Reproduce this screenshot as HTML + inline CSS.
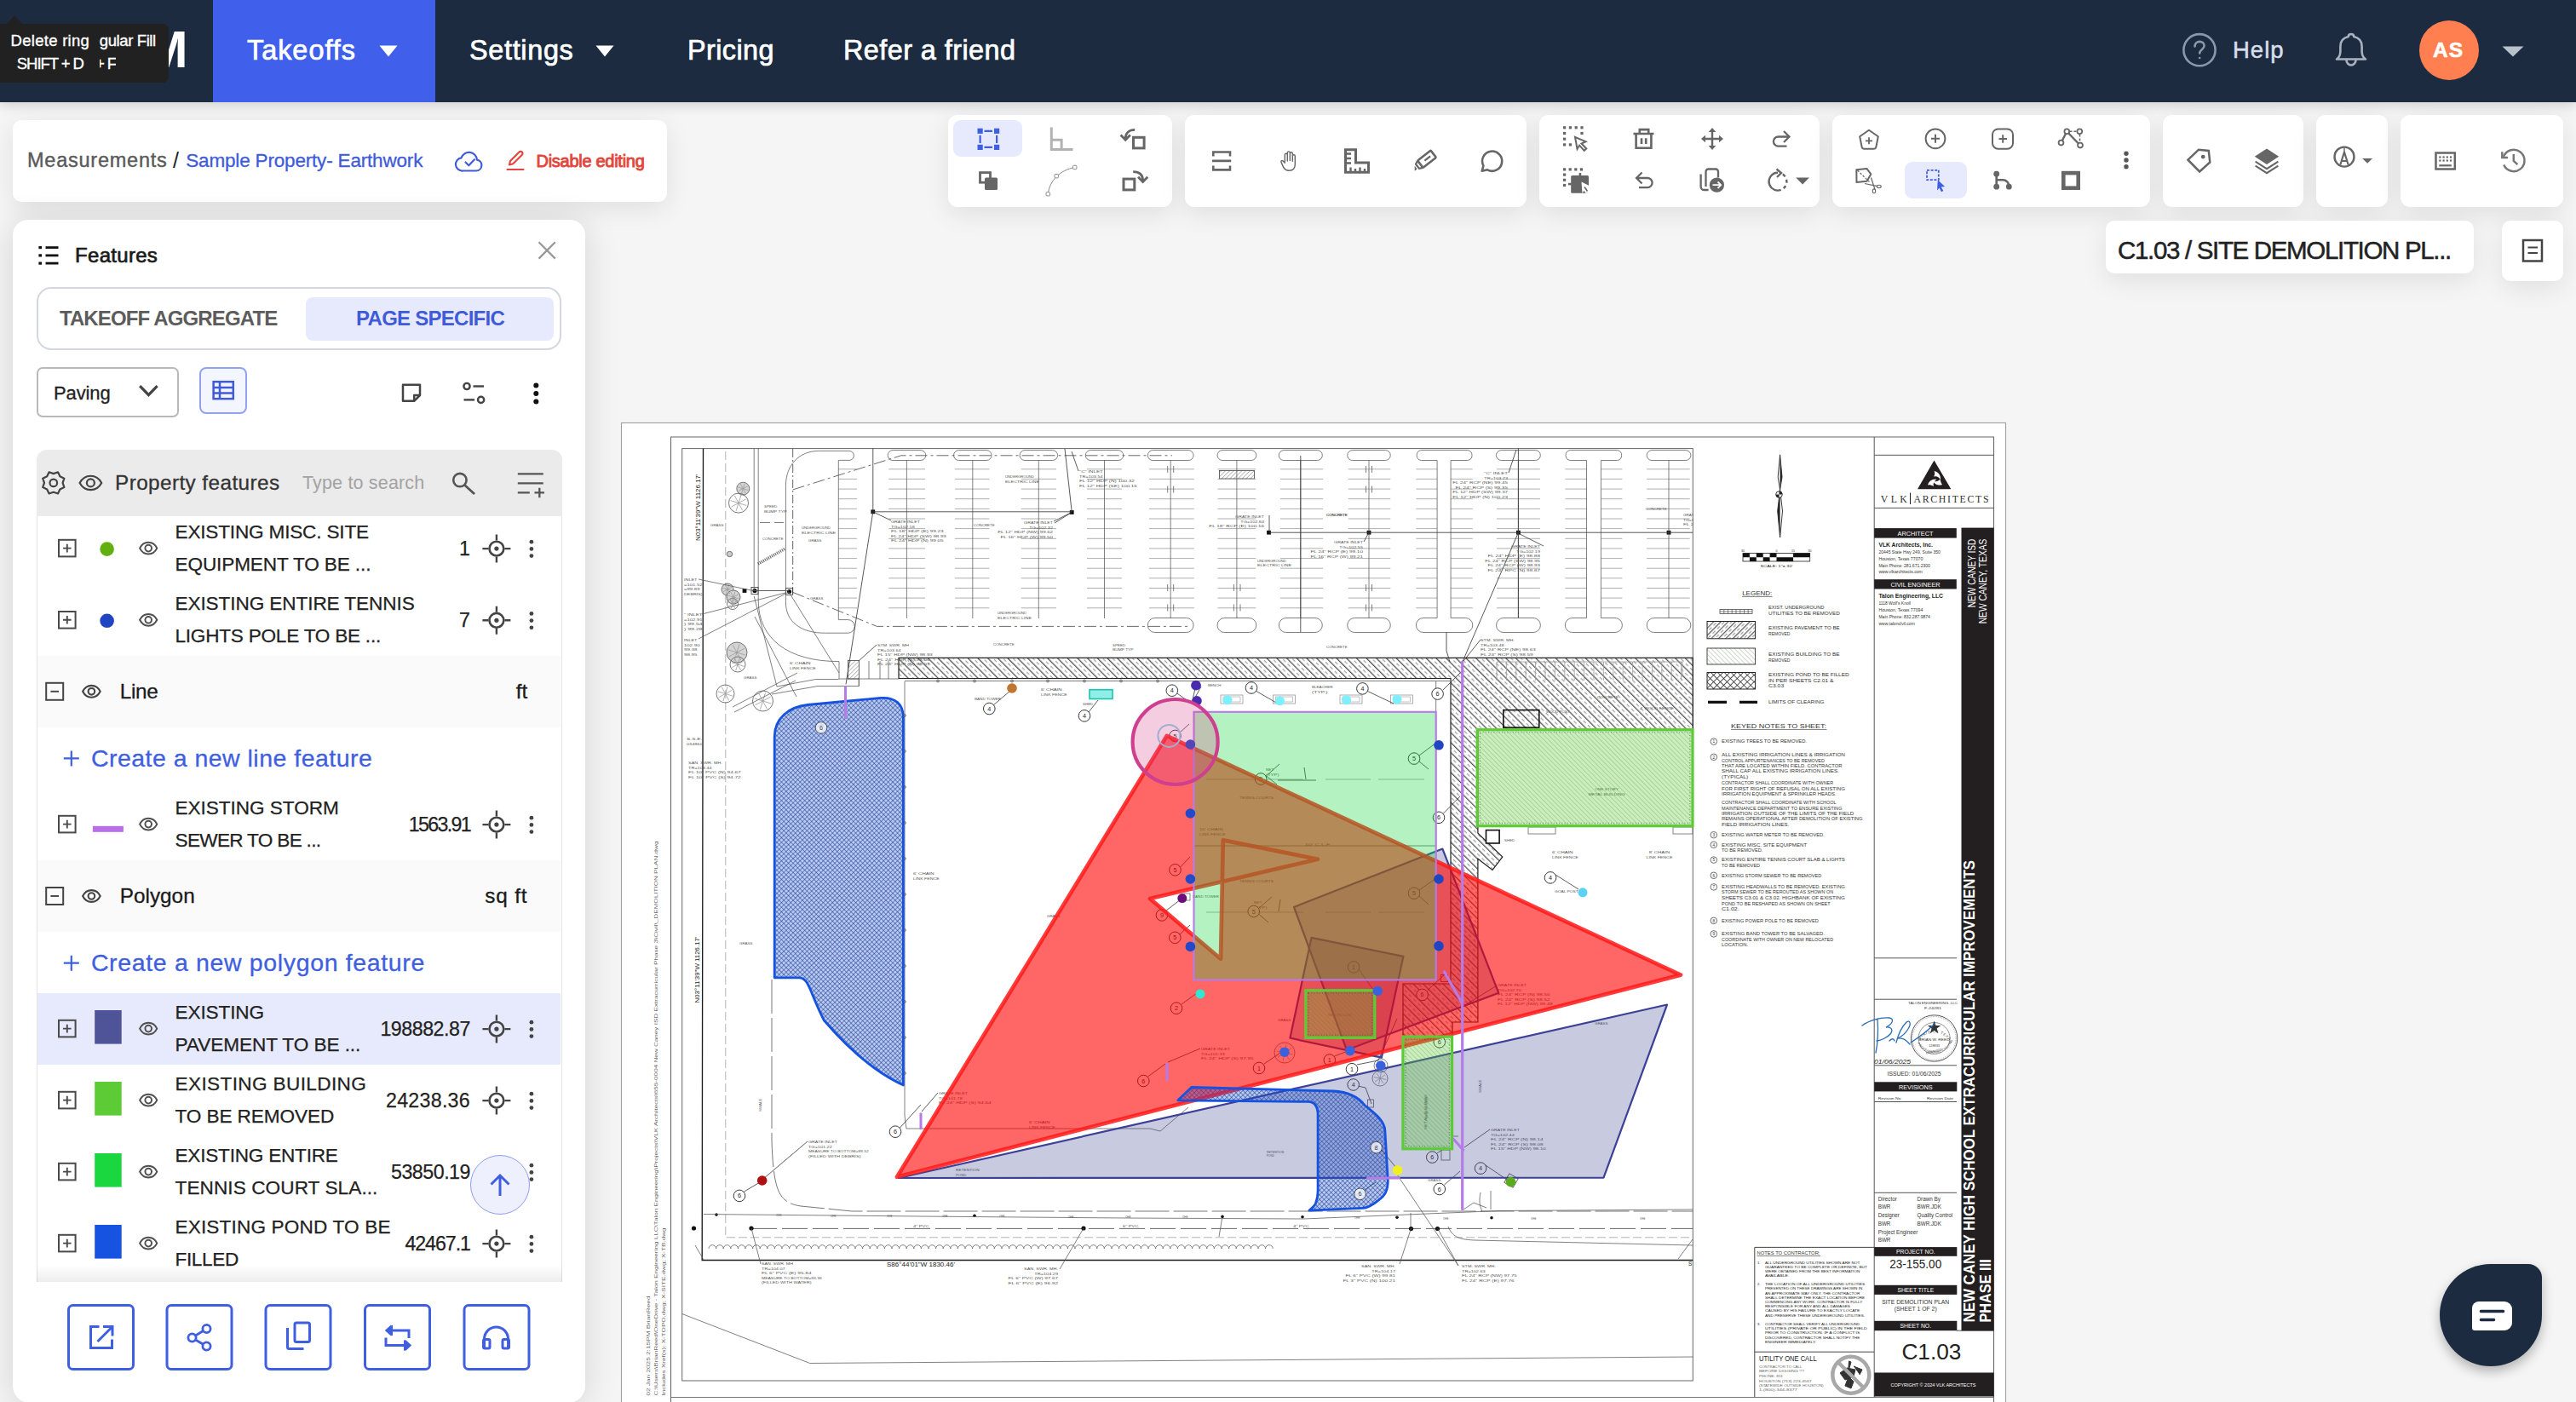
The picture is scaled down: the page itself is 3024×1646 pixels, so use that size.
<!DOCTYPE html>
<html><head><meta charset="utf-8"><title>Takeoff</title>
<style>
html,body{margin:0;padding:0}
body{width:3024px;height:1646px;overflow:hidden;background:#f5f5f5;position:relative;font-family:'Liberation Sans',sans-serif}
.t{position:absolute;white-space:nowrap;line-height:1;display:block}
.card{position:absolute;background:#fff;border-radius:12px;box-shadow:0 8px 30px rgba(0,0,0,.09)}
svg{position:absolute;overflow:visible}
</style></head><body>
<!-- part_map -->
<svg style="left:0;top:0" width="3024" height="1646" viewBox="0 0 3024 1646" font-family="'Liberation Sans',sans-serif">
<defs>
<pattern id="hA" patternUnits="userSpaceOnUse" width="8.270" height="7.500" patternTransform="rotate(-45)"><path d="M.700 0V7.500" stroke="#222" stroke-width="1"/><path d="M4.830 0V4.300" stroke="#555" stroke-width=".68"/></pattern>
<pattern id="hA2" patternUnits="userSpaceOnUse" width="6" height="7.500" patternTransform="rotate(45)"><path d="M.700 0V7.500" stroke="#2a2a2a" stroke-width=".9"/><path d="M3.700 0V4.300" stroke="#555" stroke-width=".7"/></pattern>
<pattern id="hX2" patternUnits="userSpaceOnUse" width="5.600" height="5.600" patternTransform="rotate(45)"><path d="M.400 0V5.600M0 .400H5.600" stroke="#222" stroke-width=".8"/></pattern>
<pattern id="hB" patternUnits="userSpaceOnUse" width="3.900" height="8" patternTransform="rotate(-45)"><path d="M0 0V8" stroke="#4a6a42" stroke-width=".55"/></pattern>
<pattern id="hL" patternUnits="userSpaceOnUse" width="3.400" height="8" patternTransform="rotate(45)"><path d="M0 0V8" stroke="#333" stroke-width=".7"/></pattern>
<pattern id="hX" patternUnits="userSpaceOnUse" width="3.850" height="3.850" patternTransform="rotate(45)"><path d="M.400 0V3.850M0 .400H3.850" stroke="#1f2c5c" stroke-width=".58"/></pattern>
<clipPath id="cpPlan"><rect x="800.700" y="526.600" width="1186.600" height="1094.400"/></clipPath>
</defs>
<rect x="729.500" y="496.500" width="1625" height="1170" fill="#fff" stroke="#a0a0a0" stroke-width="1.100"/>
<path d="M787.500 1646V513H2340.500V1646" fill="none" stroke="#666" stroke-width="1.100"/>
<path d="M787.500 1640.500H2340" fill="none" stroke="#777" stroke-width="1"/>
<rect x="800.700" y="526.600" width="1186.600" height="1094.400" fill="none" stroke="#666" stroke-width="1"/>
<path d="M825.500 526.600L824.200 1479.500H1987.300" fill="none" stroke="#1a1a1a" stroke-width="1.350"/>
<path d="M851.800 530V1452.800H1987" fill="none" stroke="#aaa" stroke-width=".9" stroke-dasharray="10 4"/>
<path d="M930.700 527V697.700" fill="none" stroke="#555" stroke-width=".9" stroke-dasharray="10 3 2 3"/>
<rect x="1431.500" y="552.500" width="41" height="9.500" fill="url(#hL)" stroke="#444" stroke-width=".8"/>
<rect x="1022.4" y="598.4" width="4.800" height="4.800" fill="#111"/>
<rect x="1255.8" y="599.1" width="4.800" height="4.800" fill="#111"/>
<rect x="1487.1" y="622.8" width="4.800" height="4.800" fill="#111"/>
<rect x="1604.6" y="622.8" width="4.800" height="4.800" fill="#111"/>
<rect x="1780.0" y="622.8" width="4.800" height="4.800" fill="#111"/>
<rect x="1956.6" y="622.8" width="4.800" height="4.800" fill="#111"/>
<rect x="871.6" y="691.1" width="4.800" height="4.800" fill="#111"/>
<path d="M930.700 574.900L1057.800 534.800H1376M930.700 695.400L1029.500 735.400H1395" fill="none" stroke="#444" stroke-width=".8" stroke-dasharray="14 4 3 4"/>
<circle cx="886" cy="693.500" r="2.600" fill="#111"/><circle cx="926.500" cy="694.500" r="2.600" fill="#111"/><rect x="882" y="689.500" width="8" height="8" fill="none" stroke="#333" stroke-width=".8"/><rect x="922.500" y="690.500" width="8" height="8" fill="none" stroke="#333" stroke-width=".8"/>
<path d="M890 662L922 644" stroke="#555" stroke-width="3.500" stroke-dasharray="1 1.300" fill="none"/>
<circle cx="872.3" cy="573.7" r="7.5" fill="#d4d4d4" stroke="#555" stroke-width=".8"/>
<circle cx="867" cy="590.6" r="11.5" fill="none" stroke="#555" stroke-width=".8"/>
<circle cx="854" cy="692" r="7" fill="#d4d4d4" stroke="#555" stroke-width=".8"/>
<circle cx="861" cy="701" r="8" fill="#d4d4d4" stroke="#555" stroke-width=".8"/>
<circle cx="860" cy="709" r="6.5" fill="none" stroke="#555" stroke-width=".8"/>
<circle cx="865" cy="766" r="12" fill="#d4d4d4" stroke="#555" stroke-width=".8"/>
<circle cx="866" cy="780" r="9" fill="none" stroke="#555" stroke-width=".8"/>
<circle cx="851.5" cy="814.5" r="10.5" fill="none" stroke="#555" stroke-width=".8"/>
<circle cx="895.5" cy="823" r="12" fill="none" stroke="#555" stroke-width=".8"/>
<circle cx="856.500" cy="650.500" r="3.200" fill="#ccc" stroke="#555" stroke-width=".8"/>
<path d="M1055 772.400H1987.300V856.700H1734.900V978.200L1763.800 1006L1752 1021.400L1734.900 1008.200V1200H1705V1217H1647V1155H1703V796.500H1055Z" fill="url(#hA)" stroke="#222" stroke-width="1.200"/>
<rect x="995.400" y="775.400" width="13" height="21.600" fill="url(#hL)" stroke="#444" stroke-width=".8"/>
<circle cx="1101" cy="799.500" r="1.500" fill="#fff" stroke="#444" stroke-width=".7"/>
<circle cx="1144" cy="799.500" r="1.500" fill="#fff" stroke="#444" stroke-width=".7"/>
<circle cx="1188" cy="799.500" r="1.500" fill="#fff" stroke="#444" stroke-width=".7"/>
<circle cx="1230" cy="799.500" r="1.500" fill="#fff" stroke="#444" stroke-width=".7"/>
<circle cx="1273" cy="799.500" r="1.500" fill="#fff" stroke="#444" stroke-width=".7"/>
<circle cx="1316" cy="799.500" r="1.500" fill="#fff" stroke="#444" stroke-width=".7"/>
<circle cx="1359" cy="799.500" r="1.500" fill="#fff" stroke="#444" stroke-width=".7"/>
<circle cx="1062" cy="840" r="1.400" fill="#fff" stroke="#444" stroke-width=".7"/>
<circle cx="1062" cy="882" r="1.400" fill="#fff" stroke="#444" stroke-width=".7"/>
<circle cx="1062" cy="924" r="1.400" fill="#fff" stroke="#444" stroke-width=".7"/>
<circle cx="1062" cy="966" r="1.400" fill="#fff" stroke="#444" stroke-width=".7"/>
<circle cx="1062" cy="1008" r="1.400" fill="#fff" stroke="#444" stroke-width=".7"/>
<circle cx="1062" cy="1050" r="1.400" fill="#fff" stroke="#444" stroke-width=".7"/>
<circle cx="1062" cy="1092" r="1.400" fill="#fff" stroke="#444" stroke-width=".7"/>
<circle cx="1062" cy="1134" r="1.400" fill="#fff" stroke="#444" stroke-width=".7"/>
<circle cx="1062" cy="1176" r="1.400" fill="#fff" stroke="#444" stroke-width=".7"/>
<circle cx="1062" cy="1218" r="1.400" fill="#fff" stroke="#444" stroke-width=".7"/>
<circle cx="1062" cy="1260" r="1.400" fill="#fff" stroke="#444" stroke-width=".7"/>
<rect x="1734.2" y="856.7" width="252.8" height="113.0" fill="url(#hB)" stroke="#333" stroke-width=".8"/>
<rect x="1532.8" y="1162.8" width="81.0" height="55.5" fill="url(#hB)" stroke="#333" stroke-width=".8"/>
<rect x="1646.9" y="1217.1" width="57.7" height="131.7" fill="url(#hB)" stroke="#333" stroke-width=".8"/>
<rect x="1764.800" y="833.600" width="42" height="20.500" fill="none" stroke="#111" stroke-width="1.600"/>
<rect x="1744.500" y="974.600" width="15.600" height="15.400" fill="#fff" stroke="#111" stroke-width="1.600"/>
<rect x="1794" y="971" width="32" height="8" fill="none" stroke="#666" stroke-width=".8"/><rect x="1964" y="971" width="23" height="8" fill="none" stroke="#666" stroke-width=".8"/>
<rect x="1433" y="816" width="26" height="10" fill="none" stroke="#999" stroke-width=".8"/><rect x="1436" y="818" width="20" height="6" fill="none" stroke="#aaa" stroke-width=".7"/>
<rect x="1494.5" y="816" width="26" height="10" fill="none" stroke="#999" stroke-width=".8"/><rect x="1497.5" y="818" width="20" height="6" fill="none" stroke="#aaa" stroke-width=".7"/>
<rect x="1573" y="816" width="26" height="10" fill="none" stroke="#999" stroke-width=".8"/><rect x="1576" y="818" width="20" height="6" fill="none" stroke="#aaa" stroke-width=".7"/>
<rect x="1632.5" y="816" width="26" height="10" fill="none" stroke="#999" stroke-width=".8"/><rect x="1635.5" y="818" width="20" height="6" fill="none" stroke="#aaa" stroke-width=".7"/>
<path d="M906 1150V1340C908 1400 915 1412 940 1416L1000 1422H1987" fill="none" stroke="#666" stroke-width=".9" stroke-dasharray="40 5"/>
<circle cx="841" cy="1426.1" r="1.800" fill="#111"/>
<circle cx="1144" cy="1427.3" r="1.800" fill="#111"/>
<circle cx="1435" cy="1428.4" r="1.800" fill="#111"/>
<circle cx="1529" cy="1428.8" r="1.800" fill="#111"/>
<circle cx="1640" cy="1429.3" r="1.800" fill="#111"/>
<circle cx="1751" cy="1429.7" r="1.800" fill="#111"/>
<path d="M882 1442.400H1987" fill="none" stroke="#555" stroke-width=".9" stroke-dasharray="30 6"/>
<circle cx="882" cy="1442" r="2.600" fill="#111"/>
<circle cx="1272" cy="1442" r="2.600" fill="#111"/>
<circle cx="1656.5" cy="1442.5" r="2.600" fill="#111"/>
<circle cx="1687.5" cy="1442.5" r="2.600" fill="#111"/>
<circle cx="814.5" cy="1442" r="2.600" fill="#111"/>
<path d="M832.0 1466a4.300 4.300 0 0 1 8.600 0M840.6 1466a4.300 4.300 0 0 1 8.600 0M849.2 1466a4.300 4.300 0 0 1 8.600 0M857.8 1466a4.300 4.300 0 0 1 8.600 0M866.4 1466a4.300 4.300 0 0 1 8.600 0M875.0 1466a4.300 4.300 0 0 1 8.600 0M883.6 1466a4.300 4.300 0 0 1 8.600 0M892.2 1466a4.300 4.300 0 0 1 8.600 0M900.8 1466a4.300 4.300 0 0 1 8.600 0M909.4 1466a4.300 4.300 0 0 1 8.600 0M918.0 1466a4.300 4.300 0 0 1 8.600 0M926.6 1466a4.300 4.300 0 0 1 8.600 0M935.2 1466a4.300 4.300 0 0 1 8.600 0M943.8 1466a4.300 4.300 0 0 1 8.600 0M952.4 1466a4.300 4.300 0 0 1 8.600 0M961.0 1466a4.300 4.300 0 0 1 8.600 0M969.6 1466a4.300 4.300 0 0 1 8.600 0M978.2 1466a4.300 4.300 0 0 1 8.600 0M986.8 1466a4.300 4.300 0 0 1 8.600 0M995.4 1466a4.300 4.300 0 0 1 8.600 0M1004.0 1466a4.300 4.300 0 0 1 8.600 0M1012.6 1466a4.300 4.300 0 0 1 8.600 0M1021.2 1466a4.300 4.300 0 0 1 8.600 0M1029.8 1466a4.300 4.300 0 0 1 8.600 0M1038.4 1466a4.300 4.300 0 0 1 8.600 0M1047.0 1466a4.300 4.300 0 0 1 8.600 0M1055.6 1466a4.300 4.300 0 0 1 8.600 0M1064.2 1466a4.300 4.300 0 0 1 8.600 0M1072.8 1466a4.300 4.300 0 0 1 8.600 0M1081.4 1466a4.300 4.300 0 0 1 8.600 0M1090.0 1466a4.300 4.300 0 0 1 8.600 0M1098.6 1466a4.300 4.300 0 0 1 8.600 0M1107.2 1466a4.300 4.300 0 0 1 8.600 0M1115.8 1466a4.300 4.300 0 0 1 8.600 0M1124.4 1466a4.300 4.300 0 0 1 8.600 0M1133.0 1466a4.300 4.300 0 0 1 8.600 0M1141.6 1466a4.300 4.300 0 0 1 8.600 0M1150.2 1466a4.300 4.300 0 0 1 8.600 0M1158.8 1466a4.300 4.300 0 0 1 8.600 0M1167.4 1466a4.300 4.300 0 0 1 8.600 0M1176.0 1466a4.300 4.300 0 0 1 8.600 0M1184.6 1466a4.300 4.300 0 0 1 8.600 0M1193.2 1466a4.300 4.300 0 0 1 8.600 0M1201.8 1466a4.300 4.300 0 0 1 8.600 0M1210.4 1466a4.300 4.300 0 0 1 8.600 0M1219.0 1466a4.300 4.300 0 0 1 8.600 0M1227.6 1466a4.300 4.300 0 0 1 8.600 0M1236.2 1466a4.300 4.300 0 0 1 8.600 0M1244.8 1466a4.300 4.300 0 0 1 8.600 0M1253.4 1466a4.300 4.300 0 0 1 8.600 0M1262.0 1466a4.300 4.300 0 0 1 8.600 0M1270.6 1466a4.300 4.300 0 0 1 8.600 0M1279.2 1466a4.300 4.300 0 0 1 8.600 0M1287.8 1466a4.300 4.300 0 0 1 8.600 0M1296.4 1466a4.300 4.300 0 0 1 8.600 0M1305.0 1466a4.300 4.300 0 0 1 8.600 0M1313.6 1466a4.300 4.300 0 0 1 8.600 0M1322.2 1466a4.300 4.300 0 0 1 8.600 0M1330.8 1466a4.300 4.300 0 0 1 8.600 0M1339.4 1466a4.300 4.300 0 0 1 8.600 0M1348.0 1466a4.300 4.300 0 0 1 8.600 0M1356.6 1466a4.300 4.300 0 0 1 8.600 0M1365.2 1466a4.300 4.300 0 0 1 8.600 0M1373.8 1466a4.300 4.300 0 0 1 8.600 0M1382.4 1466a4.300 4.300 0 0 1 8.600 0M1391.0 1466a4.300 4.300 0 0 1 8.600 0M1399.6 1466a4.300 4.300 0 0 1 8.600 0M1408.2 1466a4.300 4.300 0 0 1 8.600 0M1416.8 1466a4.300 4.300 0 0 1 8.600 0M1425.4 1466a4.300 4.300 0 0 1 8.600 0M1434.0 1466a4.300 4.300 0 0 1 8.600 0M1442.6 1466a4.300 4.300 0 0 1 8.600 0M1451.2 1466a4.300 4.300 0 0 1 8.600 0M1459.8 1466a4.300 4.300 0 0 1 8.600 0M1468.4 1466a4.300 4.300 0 0 1 8.600 0M1477.0 1466a4.300 4.300 0 0 1 8.600 0M1485.6 1466a4.300 4.300 0 0 1 8.600 0" fill="none" stroke="#666" stroke-width=".8"/>
<rect x="1691.500" y="1144.500" width="8" height="8" fill="none" stroke="#a33" stroke-width="1"/>
<rect x="1390" y="1049" width="7" height="8" fill="#fff" stroke="#666" stroke-width=".8"/>
<rect x="1692" y="1350" width="10" height="12" fill="none" stroke="#555" stroke-width=".8"/><rect x="1605.500" y="1291" width="7" height="9" fill="none" stroke="#555" stroke-width=".8"/>
<rect x="1768" y="1380" width="12" height="12" fill="none" stroke="#444" stroke-width=".8" transform="rotate(30 1774 1386)"/>
<circle cx="1508" cy="1236" r="12" fill="none" stroke="#666" stroke-width=".8"/>
<circle cx="1621" cy="1251" r="8" fill="none" stroke="#666" stroke-width=".8"/>
<circle cx="1620" cy="1266" r="9" fill="none" stroke="#666" stroke-width=".8"/>
<path d="M984.3 550.8L1006.0 550.8M984.3 562.4L1006.0 562.4M984.3 574.1L1006.0 574.1M984.3 585.7L1006.0 585.7M984.3 597.4L1006.0 597.4M984.3 609.0L1006.0 609.0M984.3 620.6L1006.0 620.6M984.3 632.3L1006.0 632.3M984.3 643.9L1006.0 643.9M984.3 655.6L1006.0 655.6M984.3 667.2L1006.0 667.2M984.3 678.8L1006.0 678.8M984.3 690.5L1006.0 690.5M984.3 702.1L1006.0 702.1M984.3 713.8L1006.0 713.8M1043.2 550.8L1086.0 550.8M1043.2 562.4L1086.0 562.4M1043.2 574.1L1086.0 574.1M1043.2 585.7L1086.0 585.7M1043.2 597.4L1086.0 597.4M1043.2 609.0L1086.0 609.0M1043.2 620.6L1086.0 620.6M1043.2 632.3L1086.0 632.3M1043.2 643.9L1086.0 643.9M1043.2 655.6L1086.0 655.6M1043.2 667.2L1086.0 667.2M1043.2 678.8L1086.0 678.8M1043.2 690.5L1086.0 690.5M1043.2 702.1L1086.0 702.1M1043.2 713.8L1086.0 713.8M1120.9 550.8L1161.4 550.8M1120.9 562.4L1161.4 562.4M1120.9 574.1L1161.4 574.1M1120.9 585.7L1161.4 585.7M1120.9 597.4L1161.4 597.4M1120.9 609.0L1161.4 609.0M1120.9 620.6L1161.4 620.6M1120.9 632.3L1161.4 632.3M1120.9 643.9L1161.4 643.9M1120.9 655.6L1161.4 655.6M1120.9 667.2L1161.4 667.2M1120.9 678.8L1161.4 678.8M1120.9 690.5L1161.4 690.5M1120.9 702.1L1161.4 702.1M1120.9 713.8L1161.4 713.8M1198.8 550.8L1240.0 550.8M1198.8 562.4L1240.0 562.4M1198.8 574.1L1240.0 574.1M1198.8 585.7L1240.0 585.7M1198.8 597.4L1240.0 597.4M1198.8 609.0L1240.0 609.0M1198.8 620.6L1240.0 620.6M1198.8 632.3L1240.0 632.3M1198.8 643.9L1240.0 643.9M1198.8 655.6L1240.0 655.6M1198.8 667.2L1240.0 667.2M1198.8 678.8L1240.0 678.8M1198.8 690.5L1240.0 690.5M1198.8 702.1L1240.0 702.1M1198.8 713.8L1240.0 713.8M1276.0 550.8L1317.0 550.8M1276.0 562.4L1317.0 562.4M1276.0 574.1L1317.0 574.1M1276.0 585.7L1317.0 585.7M1276.0 597.4L1317.0 597.4M1276.0 609.0L1317.0 609.0M1276.0 620.6L1317.0 620.6M1276.0 632.3L1317.0 632.3M1276.0 643.9L1317.0 643.9M1276.0 655.6L1317.0 655.6M1276.0 667.2L1317.0 667.2M1276.0 678.8L1317.0 678.8M1276.0 690.5L1317.0 690.5M1276.0 702.1L1317.0 702.1M1276.0 713.8L1317.0 713.8M1349.0 550.8L1401.8 550.8M1349.0 562.4L1401.8 562.4M1349.0 574.1L1401.8 574.1M1349.0 585.7L1401.8 585.7M1349.0 597.4L1401.8 597.4M1349.0 609.0L1401.8 609.0M1349.0 620.6L1401.8 620.6M1349.0 632.3L1401.8 632.3M1349.0 643.9L1401.8 643.9M1349.0 655.6L1401.8 655.6M1349.0 667.2L1401.8 667.2M1349.0 678.8L1401.8 678.8M1349.0 690.5L1401.8 690.5M1349.0 702.1L1401.8 702.1M1349.0 713.8L1401.8 713.8M1429.5 550.8L1474.3 550.8M1429.5 562.4L1474.3 562.4M1429.5 574.1L1474.3 574.1M1429.5 585.7L1474.3 585.7M1429.5 597.4L1474.3 597.4M1429.5 609.0L1474.3 609.0M1429.5 620.6L1474.3 620.6M1429.5 632.3L1474.3 632.3M1429.5 643.9L1474.3 643.9M1429.5 655.6L1474.3 655.6M1429.5 667.2L1474.3 667.2M1429.5 678.8L1474.3 678.8M1429.5 690.5L1474.3 690.5M1429.5 702.1L1474.3 702.1M1429.5 713.8L1474.3 713.8M1503.0 550.8L1553.1 550.8M1503.0 562.4L1553.1 562.4M1503.0 574.1L1553.1 574.1M1503.0 585.7L1553.1 585.7M1503.0 597.4L1553.1 597.4M1503.0 609.0L1553.1 609.0M1503.0 620.6L1553.1 620.6M1503.0 632.3L1553.1 632.3M1503.0 643.9L1553.1 643.9M1503.0 655.6L1553.1 655.6M1503.0 667.2L1553.1 667.2M1503.0 678.8L1553.1 678.8M1503.0 690.5L1553.1 690.5M1503.0 702.1L1553.1 702.1M1503.0 713.8L1553.1 713.8M1582.8 550.8L1632.3 550.8M1582.8 562.4L1632.3 562.4M1582.8 574.1L1632.3 574.1M1582.8 585.7L1632.3 585.7M1582.8 597.4L1632.3 597.4M1582.8 609.0L1632.3 609.0M1582.8 620.6L1632.3 620.6M1582.8 632.3L1632.3 632.3M1582.8 643.9L1632.3 643.9M1582.8 655.6L1632.3 655.6M1582.8 667.2L1632.3 667.2M1582.8 678.8L1632.3 678.8M1582.8 690.5L1632.3 690.5M1582.8 702.1L1632.3 702.1M1582.8 713.8L1632.3 713.8M1757.0 550.8L1807.9 550.8M1757.0 562.4L1807.9 562.4M1757.0 574.1L1807.9 574.1M1757.0 585.7L1807.9 585.7M1757.0 597.4L1807.9 597.4M1757.0 609.0L1807.9 609.0M1757.0 620.6L1807.9 620.6M1757.0 632.3L1807.9 632.3M1757.0 643.9L1807.9 643.9M1757.0 655.6L1807.9 655.6M1757.0 667.2L1807.9 667.2M1757.0 678.8L1807.9 678.8M1757.0 690.5L1807.9 690.5M1757.0 702.1L1807.9 702.1M1757.0 713.8L1807.9 713.8M1933.1 550.8L1983.7 550.8M1933.1 562.4L1983.7 562.4M1933.1 574.1L1983.7 574.1M1933.1 585.7L1983.7 585.7M1933.1 597.4L1983.7 597.4M1933.1 609.0L1983.7 609.0M1933.1 620.6L1983.7 620.6M1933.1 632.3L1983.7 632.3M1933.1 643.9L1983.7 643.9M1933.1 655.6L1983.7 655.6M1933.1 667.2L1983.7 667.2M1933.1 678.8L1983.7 678.8M1933.1 690.5L1983.7 690.5M1933.1 702.1L1983.7 702.1M1933.1 713.8L1983.7 713.8M1662.4 550.8L1687.1 550.8M1703.1 550.8L1728.8 550.8M1662.4 562.4L1687.1 562.4M1703.1 562.4L1728.8 562.4M1662.4 574.1L1687.1 574.1M1703.1 574.1L1728.8 574.1M1662.4 585.7L1687.1 585.7M1703.1 585.7L1728.8 585.7M1662.4 597.4L1687.1 597.4M1703.1 597.4L1728.8 597.4M1662.4 609.0L1687.1 609.0M1703.1 609.0L1728.8 609.0M1662.4 620.6L1687.1 620.6M1703.1 620.6L1728.8 620.6M1662.4 632.3L1687.1 632.3M1703.1 632.3L1728.8 632.3M1662.4 643.9L1687.1 643.9M1703.1 643.9L1728.8 643.9M1662.4 655.6L1687.1 655.6M1703.1 655.6L1728.8 655.6M1662.4 667.2L1687.1 667.2M1703.1 667.2L1728.8 667.2M1662.4 678.8L1687.1 678.8M1703.1 678.8L1728.8 678.8M1662.4 690.5L1687.1 690.5M1703.1 690.5L1728.8 690.5M1662.4 702.1L1687.1 702.1M1703.1 702.1L1728.8 702.1M1662.4 713.8L1687.1 713.8M1703.1 713.8L1728.8 713.8M1837.3 550.8L1862.5 550.8M1879.4 550.8L1904.4 550.8M1837.3 562.4L1862.5 562.4M1879.4 562.4L1904.4 562.4M1837.3 574.1L1862.5 574.1M1879.4 574.1L1904.4 574.1M1837.3 585.7L1862.5 585.7M1879.4 585.7L1904.4 585.7M1837.3 597.4L1862.5 597.4M1879.4 597.4L1904.4 597.4M1837.3 609.0L1862.5 609.0M1879.4 609.0L1904.4 609.0M1837.3 620.6L1862.5 620.6M1879.4 620.6L1904.4 620.6M1837.3 632.3L1862.5 632.3M1879.4 632.3L1904.4 632.3M1837.3 643.9L1862.5 643.9M1879.4 643.9L1904.4 643.9M1837.3 655.6L1862.5 655.6M1879.4 655.6L1904.4 655.6M1837.3 667.2L1862.5 667.2M1879.4 667.2L1904.4 667.2M1837.3 678.8L1862.5 678.8M1879.4 678.8L1904.4 678.8M1837.3 690.5L1862.5 690.5M1879.4 690.5L1904.4 690.5M1837.3 702.1L1862.5 702.1M1879.4 702.1L1904.4 702.1M1837.3 713.8L1862.5 713.8M1879.4 713.8L1904.4 713.8M872.3 573.7L878.4 575.6M872.3 573.7L875.3 579.3M872.3 573.7L870.4 579.8M872.3 573.7L866.7 576.7M872.3 573.7L866.2 571.8M872.3 573.7L869.3 568.1M872.3 573.7L874.2 567.6M872.3 573.7L877.9 570.7M867.0 590.6L876.3 593.5M867.0 590.6L871.6 599.2M867.0 590.6L864.1 599.9M867.0 590.6L858.4 595.2M867.0 590.6L857.7 587.7M867.0 590.6L862.4 582.0M867.0 590.6L869.9 581.3M867.0 590.6L875.6 586.0M854.0 692.0L859.7 693.8M854.0 692.0L856.8 697.3M854.0 692.0L852.2 697.7M854.0 692.0L848.7 694.8M854.0 692.0L848.3 690.2M854.0 692.0L851.2 686.7M854.0 692.0L855.8 686.3M854.0 692.0L859.3 689.2M861.0 701.0L867.5 703.0M861.0 701.0L864.2 707.0M861.0 701.0L859.0 707.5M861.0 701.0L855.0 704.2M861.0 701.0L854.5 699.0M861.0 701.0L857.8 695.0M861.0 701.0L863.0 694.5M861.0 701.0L867.0 697.8M860.0 709.0L865.3 710.6M860.0 709.0L862.6 713.9M860.0 709.0L858.4 714.3M860.0 709.0L855.1 711.6M860.0 709.0L854.7 707.4M860.0 709.0L857.4 704.1M860.0 709.0L861.6 703.7M860.0 709.0L864.9 706.4M865.0 766.0L874.7 769.0M865.0 766.0L869.8 775.0M865.0 766.0L862.0 775.7M865.0 766.0L856.0 770.8M865.0 766.0L855.3 763.0M865.0 766.0L860.2 757.0M865.0 766.0L868.0 756.3M865.0 766.0L874.0 761.2M866.0 780.0L873.3 782.3M866.0 780.0L869.6 786.8M866.0 780.0L863.7 787.3M866.0 780.0L859.2 783.6M866.0 780.0L858.7 777.7M866.0 780.0L862.4 773.2M866.0 780.0L868.3 772.7M866.0 780.0L872.8 776.4M851.5 814.5L860.0 817.1M851.5 814.5L855.7 822.4M851.5 814.5L848.9 823.0M851.5 814.5L843.6 818.7M851.5 814.5L843.0 811.9M851.5 814.5L847.3 806.6M851.5 814.5L854.1 806.0M851.5 814.5L859.4 810.3M895.5 823.0L905.2 826.0M895.5 823.0L900.3 832.0M895.5 823.0L892.5 832.7M895.5 823.0L886.5 827.8M895.5 823.0L885.8 820.0M895.5 823.0L890.7 814.0M895.5 823.0L898.5 813.3M895.5 823.0L904.5 818.2M1757.0 777.0L1757.0 799.0M1768.4 777.0L1768.4 799.0M1779.8 777.0L1779.8 799.0M1791.2 777.0L1791.2 799.0M1802.6 777.0L1802.6 799.0M1814.0 777.0L1814.0 799.0M1825.4 777.0L1825.4 799.0M1836.8 777.0L1836.8 799.0M1848.2 777.0L1848.2 799.0M1859.6 777.0L1859.6 799.0M1871.0 777.0L1871.0 799.0M1882.4 777.0L1882.4 799.0M1893.8 777.0L1893.8 799.0M1905.2 777.0L1905.2 799.0M1916.6 777.0L1916.6 799.0M1928.0 777.0L1928.0 799.0M1939.4 777.0L1939.4 799.0M1950.8 777.0L1950.8 799.0M1962.2 777.0L1962.2 799.0M1973.6 777.0L1973.6 799.0M1757 777H1975V795M1416 915H1530M1556 915H1609M1618 915H1672M1416 1071H1530M1556 1071H1609M1618 1071H1672M1508.0 1236.0L1517.4 1237.9M1508.0 1236.0L1513.3 1244.0M1508.0 1236.0L1506.1 1245.4M1508.0 1236.0L1500.0 1241.3M1508.0 1236.0L1498.6 1234.1M1508.0 1236.0L1502.7 1228.0M1508.0 1236.0L1509.9 1226.6M1508.0 1236.0L1516.0 1230.7M1621.0 1251.0L1627.3 1252.3M1621.0 1251.0L1624.5 1256.3M1621.0 1251.0L1619.7 1257.3M1621.0 1251.0L1615.7 1254.5M1621.0 1251.0L1614.7 1249.7M1621.0 1251.0L1617.5 1245.7M1621.0 1251.0L1622.3 1244.7M1621.0 1251.0L1626.3 1247.5M1620.0 1266.0L1627.1 1267.4M1620.0 1266.0L1624.0 1272.0M1620.0 1266.0L1618.6 1273.1M1620.0 1266.0L1614.0 1270.0M1620.0 1266.0L1612.9 1264.6M1620.0 1266.0L1616.0 1260.0M1620.0 1266.0L1621.4 1258.9M1620.0 1266.0L1626.0 1262.0" fill="none" stroke="#9a9a9a" stroke-width=".8"/>
<path d="M800.700 1542.500L950.700 1600.500L1987.300 1593M885.200 526.600V693M890.200 526.600V705C890.200 750 925 776.600 985 776.600V797M885.200 700L912 806M961.300 529.400H996.900A5.500 5.500 0 0 1 996.900 540.400H984.300V727.600H995.500A7.800 7.800 0 0 1 995.500 743.200H968.300C940 743.200 922.400 730 922.400 707V570.600C922.400 546 938 529.400 961.300 529.400ZM1064.4 540.5L1064.4 726.0M1048.1 528.6H1080.8A5.9 5.9 0 0 1 1080.8 540.5H1048.1A5.9 5.9 0 0 1 1048.1 528.6ZM1141.8 540.5L1141.8 726.0M1125.5 528.6H1158.1A5.9 5.9 0 0 1 1158.1 540.5H1125.5A5.9 5.9 0 0 1 1125.5 528.6ZM1219.3 540.5L1219.3 726.0M1203.0 528.6H1235.6A5.9 5.9 0 0 1 1235.6 540.5H1203.0A5.9 5.9 0 0 1 1203.0 528.6ZM1296.5 540.5L1296.5 726.0M1280.2 528.6H1312.8A5.9 5.9 0 0 1 1312.8 540.5H1280.2A5.9 5.9 0 0 1 1280.2 528.6ZM1374.2 540.5L1374.2 726.0M1353.3 528.6H1395.1A5.9 5.9 0 0 1 1395.1 540.5H1353.3A5.9 5.9 0 0 1 1353.3 528.6ZM1355.8 725.5H1392.6A8.5 8.5 0 0 1 1392.6 742.5H1355.8A8.5 8.5 0 0 1 1355.8 725.5ZM1451.9 540.5L1451.9 726.0M1435.0 528.6H1468.9A5.9 5.9 0 0 1 1468.9 540.5H1435.0A5.9 5.9 0 0 1 1435.0 528.6ZM1437.5 725.5H1466.3A8.5 8.5 0 0 1 1466.3 742.5H1437.5A8.5 8.5 0 0 1 1437.5 725.5ZM1526.8 540.5L1526.8 726.0M1507.2 528.6H1546.4A5.9 5.9 0 0 1 1546.4 540.5H1507.2A5.9 5.9 0 0 1 1507.2 528.6ZM1509.8 725.5H1543.8A8.5 8.5 0 0 1 1543.8 742.5H1509.8A8.5 8.5 0 0 1 1509.8 725.5ZM1607.0 540.5L1607.0 726.0M1587.7 528.6H1626.3A5.9 5.9 0 0 1 1626.3 540.5H1587.7A5.9 5.9 0 0 1 1587.7 528.6ZM1590.2 725.5H1623.8A8.5 8.5 0 0 1 1623.8 742.5H1590.2A8.5 8.5 0 0 1 1590.2 725.5ZM1782.4 540.5L1782.4 726.0M1762.4 528.6H1802.4A5.9 5.9 0 0 1 1802.4 540.5H1762.4A5.9 5.9 0 0 1 1762.4 528.6ZM1765.0 725.5H1799.9A8.5 8.5 0 0 1 1799.9 742.5H1765.0A8.5 8.5 0 0 1 1765.0 725.5ZM1959.0 540.5L1959.0 726.0M1939.1 528.6H1978.9A5.9 5.9 0 0 1 1978.9 540.5H1939.1A5.9 5.9 0 0 1 1939.1 528.6ZM1941.7 725.5H1976.3A8.5 8.5 0 0 1 1976.3 742.5H1941.7A8.5 8.5 0 0 1 1941.7 725.5ZM1668.4 528.600H1722.8A6 6 0 0 1 1722.8 540.500H1703.1V725.500H1720.3A8.500 8.500 0 0 1 1720.3 742.500H1670.9A8.500 8.500 0 0 1 1670.9 725.500H1687.1V540.500H1668.4A6 6 0 0 1 1668.4 528.600ZM1843.3 528.600H1898.4A6 6 0 0 1 1898.4 540.500H1879.4V725.500H1895.9A8.500 8.500 0 0 1 1895.9 742.500H1845.8A8.500 8.500 0 0 1 1845.8 725.500H1862.5V540.500H1843.3A6 6 0 0 1 1843.3 528.600ZM1370.7 547.0L1370.7 555.0M1377.7 547.0L1377.7 555.0M1370.7 570.5L1370.7 578.5M1377.7 570.5L1377.7 578.5M1370.7 686.0L1370.7 694.0M1377.7 686.0L1377.7 694.0M1370.7 709.5L1370.7 717.5M1377.7 709.5L1377.7 717.5M1603.5 547.0L1603.5 555.0M1610.5 547.0L1610.5 555.0M1603.5 570.5L1603.5 578.5M1610.5 570.5L1610.5 578.5M1603.5 686.0L1603.5 694.0M1610.5 686.0L1610.5 694.0M1603.5 709.5L1603.5 717.5M1610.5 709.5L1610.5 717.5M1448.4 686.0L1448.4 694.0M1456.0 686.0L1456.0 694.0M1448.4 709.5L1448.4 717.5M1456.0 709.5L1456.0 717.5M820 680L884 693.500H922M824 721L922 696M820 750L926 695M926 695L985 790M885.200 693.500H926M892 613.500H904M909 613.500H920M886 724L935 818M912 806L957.700 797.500H984.800M906 815L960 805.500H1008.300V797M860 830L936 790M862 836L934 799M984.800 797H1055M1008.300 797V805.500M1020.0 776.0L1020.0 797.0M1033.0 776.0L1033.0 797.0M1043.0 776.0L1043.0 797.0M1062 799.500H1702M1062 800V1310L1064 1325H1350L1362 1328L1395 1300M1401.500 993H1685.700M1685.700 800V1150M826 1425.500L1080 1428L1320 1430L1530 1431L1760 1421.500L1987 1420M882 1442L893 1484M1272 1442L1244 1490M1656.500 1442L1643 1484M1687.500 1442L1712 1486L1640.700 1380M1434.500 1431L1431 1452M1656 1424V1440M826 1479L816 1462M1718 1420L1730 1412L1745 1418M1700 1440C1705 1452 1712 1455 1730 1456L1987 1462M1738 1400C1736 1410 1737 1416 1740 1422M1750 1398V1420M1970 1478L1987 1455M1705 1218V1334H1712M1706 1336L1712 1345" fill="none" stroke="#555" stroke-width=".75"/>
<path d="M1024.800 526.600V600.800L993 803.500M1024.800 600.800H1258.200L1250 527M1258 601.500L1238 614M1489.500 625.200H1987M1782.400 526.600V725M1782.400 625.200L1716.500 777.800M1526.800 535V742M1698 742V764L1702 777" fill="none" stroke="#3a3a3a" stroke-width=".85"/>
<path d="M909.200 1147.800V865C909.200 843 926 830 948 827.500L1034 819.400C1051 818.200 1060.400 827 1060.400 842V1274C1034 1262 1001 1237 967.400 1198C950.700 1166 950 1147.800 938 1147.800Z" fill="url(#hX)"/><path d="M1398.800 1276.500L1565.400 1281C1585 1282 1596 1290 1601.900 1297.500C1613 1306 1625.900 1316 1625.900 1328L1629.300 1386.500C1629 1398 1626 1404 1617.900 1409.300C1611 1415 1606 1418 1599.600 1418.400L1536.900 1421.100C1542 1417 1544.800 1414 1544.800 1411.600C1546.500 1407 1547.100 1402 1547.100 1397.900V1308.900C1547 1299 1543 1293.600 1535.700 1293.400L1382.800 1291.800Z" fill="url(#hX)"/>
<text x="1046.0" y="614.0" font-size="4.4" fill="#555" textLength="33.9" lengthAdjust="spacingAndGlyphs">GRATE INLET</text>
<text x="1046.0" y="619.6" font-size="4.4" fill="#555" textLength="27.7" lengthAdjust="spacingAndGlyphs">TG=102.18</text>
<text x="1046.0" y="625.2" font-size="4.4" fill="#555" textLength="61.6" lengthAdjust="spacingAndGlyphs">FL 18&quot; HDP (E) 99.23</text>
<text x="1046.0" y="630.8" font-size="4.4" fill="#555" textLength="64.7" lengthAdjust="spacingAndGlyphs">FL 24&quot; HDP (SW) 98.93</text>
<text x="1046.0" y="636.4" font-size="4.4" fill="#555" textLength="61.6" lengthAdjust="spacingAndGlyphs">FL 24&quot; HDP (N) 99.05</text>
<text x="1236.0" y="615.0" font-size="4.4" fill="#555" text-anchor="end" textLength="33.9" lengthAdjust="spacingAndGlyphs">GRATE INLET</text>
<text x="1236.0" y="620.6" font-size="4.4" fill="#555" text-anchor="end" textLength="27.7" lengthAdjust="spacingAndGlyphs">TG=102.32</text>
<text x="1236.0" y="626.2" font-size="4.4" fill="#555" text-anchor="end" textLength="64.7" lengthAdjust="spacingAndGlyphs">FL 12&quot; HDP (NW) 99.62</text>
<text x="1236.0" y="631.8" font-size="4.4" fill="#555" text-anchor="end" textLength="61.6" lengthAdjust="spacingAndGlyphs">FL 16&quot; HDP (W) 99.50</text>
<text x="1267.0" y="555.0" font-size="4.4" fill="#555" textLength="27.7" lengthAdjust="spacingAndGlyphs">&quot;C&quot; INLET</text>
<text x="1267.0" y="560.6" font-size="4.4" fill="#555" textLength="27.7" lengthAdjust="spacingAndGlyphs">TR=103.54</text>
<text x="1267.0" y="566.2" font-size="4.4" fill="#555" textLength="64.7" lengthAdjust="spacingAndGlyphs">FL 12&quot; HDP (N) 100.32</text>
<text x="1267.0" y="571.8" font-size="4.4" fill="#555" textLength="67.8" lengthAdjust="spacingAndGlyphs">FL 12&quot; HDP (SE) 100.16</text>
<text x="1484.0" y="608.0" font-size="4.4" fill="#555" text-anchor="end" textLength="33.9" lengthAdjust="spacingAndGlyphs">GRATE INLET</text>
<text x="1484.0" y="613.6" font-size="4.4" fill="#555" text-anchor="end" textLength="27.7" lengthAdjust="spacingAndGlyphs">TG=102.84</text>
<text x="1484.0" y="619.2" font-size="4.4" fill="#555" text-anchor="end" textLength="64.7" lengthAdjust="spacingAndGlyphs">FL 18&quot; RCP (E) 100.16</text>
<text x="1600.0" y="638.0" font-size="4.4" fill="#555" text-anchor="end" textLength="33.9" lengthAdjust="spacingAndGlyphs">GRATE INLET</text>
<text x="1600.0" y="643.6" font-size="4.4" fill="#555" text-anchor="end" textLength="27.7" lengthAdjust="spacingAndGlyphs">TG=102.55</text>
<text x="1600.0" y="649.2" font-size="4.4" fill="#555" text-anchor="end" textLength="61.6" lengthAdjust="spacingAndGlyphs">FL 24&quot; RCP (E) 99.10</text>
<text x="1600.0" y="654.8" font-size="4.4" fill="#555" text-anchor="end" textLength="61.6" lengthAdjust="spacingAndGlyphs">FL 16&quot; RCP (W) 99.21</text>
<text x="1770.0" y="557.0" font-size="4.4" fill="#555" text-anchor="end" textLength="27.7" lengthAdjust="spacingAndGlyphs">&quot;C&quot; INLET</text>
<text x="1770.0" y="562.6" font-size="4.4" fill="#555" text-anchor="end" textLength="27.7" lengthAdjust="spacingAndGlyphs">TR=103.73</text>
<text x="1770.0" y="568.2" font-size="4.4" fill="#555" text-anchor="end" textLength="64.7" lengthAdjust="spacingAndGlyphs">FL 24&quot; RCP (NE) 99.45</text>
<text x="1770.0" y="573.8" font-size="4.4" fill="#555" text-anchor="end" textLength="61.6" lengthAdjust="spacingAndGlyphs">FL 24&quot; RCP (S) 99.35</text>
<text x="1770.0" y="579.4" font-size="4.4" fill="#555" text-anchor="end" textLength="64.7" lengthAdjust="spacingAndGlyphs">FL 12&quot; HDP (SW) 99.37</text>
<text x="1770.0" y="585.0" font-size="4.4" fill="#555" text-anchor="end" textLength="64.7" lengthAdjust="spacingAndGlyphs">FL 12&quot; HDP (N) 100.23</text>
<text x="1808.0" y="643.0" font-size="4.4" fill="#555" text-anchor="end" textLength="33.9" lengthAdjust="spacingAndGlyphs">GRATE INLET</text>
<text x="1808.0" y="648.6" font-size="4.4" fill="#555" text-anchor="end" textLength="27.7" lengthAdjust="spacingAndGlyphs">TG=102.19</text>
<text x="1808.0" y="654.2" font-size="4.4" fill="#555" text-anchor="end" textLength="61.6" lengthAdjust="spacingAndGlyphs">FL 24&quot; HDP (E) 98.88</text>
<text x="1808.0" y="659.8" font-size="4.4" fill="#555" text-anchor="end" textLength="64.7" lengthAdjust="spacingAndGlyphs">FL 24&quot; RCP (SW) 98.95</text>
<text x="1808.0" y="665.4" font-size="4.4" fill="#555" text-anchor="end" textLength="61.6" lengthAdjust="spacingAndGlyphs">FL 24&quot; RCP (W) 98.93</text>
<text x="1808.0" y="671.0" font-size="4.4" fill="#555" text-anchor="end" textLength="61.6" lengthAdjust="spacingAndGlyphs">FL 24&quot; RPC (N) 98.87</text>
<text x="1738.0" y="753.0" font-size="4.4" fill="#555" textLength="40.0" lengthAdjust="spacingAndGlyphs">STM. SWR. MH.</text>
<text x="1738.0" y="758.6" font-size="4.4" fill="#555" textLength="27.7" lengthAdjust="spacingAndGlyphs">TR=103.48</text>
<text x="1738.0" y="764.2" font-size="4.4" fill="#555" textLength="64.7" lengthAdjust="spacingAndGlyphs">FL 24&quot; RCP (NE) 98.63</text>
<text x="1738.0" y="769.8" font-size="4.4" fill="#555" textLength="61.6" lengthAdjust="spacingAndGlyphs">FL 24&quot; RCP (S) 98.59</text>
<text x="1030.0" y="759.0" font-size="4.4" fill="#555" textLength="37.0" lengthAdjust="spacingAndGlyphs">STM. SWR. MH</text>
<text x="1030.0" y="764.6" font-size="4.4" fill="#555" textLength="27.7" lengthAdjust="spacingAndGlyphs">TR=103.64</text>
<text x="1030.0" y="770.2" font-size="4.4" fill="#555" textLength="64.7" lengthAdjust="spacingAndGlyphs">FL 15&quot; HDP (NW) 98.93</text>
<text x="1030.0" y="775.8" font-size="4.4" fill="#555" textLength="61.6" lengthAdjust="spacingAndGlyphs">FL 24&quot; HDP (S) 98.06</text>
<text x="1030.0" y="781.4" font-size="4.4" fill="#555" textLength="61.6" lengthAdjust="spacingAndGlyphs">FL 24&quot; HDP (N) 98.07</text>
<text x="1976.0" y="606.0" font-size="4.4" fill="#555" textLength="12.3" lengthAdjust="spacingAndGlyphs">GRAT</text>
<text x="1976.0" y="611.6" font-size="4.4" fill="#555" textLength="12.3" lengthAdjust="spacingAndGlyphs">TG=1</text>
<text x="1976.0" y="617.2" font-size="4.4" fill="#555" textLength="12.3" lengthAdjust="spacingAndGlyphs">FL 2</text>
<text x="1180.0" y="561.0" font-size="4.4" fill="#555" textLength="33.9" lengthAdjust="spacingAndGlyphs">UNDERGROUND</text>
<text x="1180.0" y="566.6" font-size="4.4" fill="#555" textLength="40.0" lengthAdjust="spacingAndGlyphs">ELECTRIC LINE</text>
<text x="941.0" y="621.0" font-size="4.4" fill="#555" textLength="33.9" lengthAdjust="spacingAndGlyphs">UNDERGROUND</text>
<text x="941.0" y="626.6" font-size="4.4" fill="#555" textLength="40.0" lengthAdjust="spacingAndGlyphs">ELECTRIC LINE</text>
<text x="1171.0" y="721.0" font-size="4.4" fill="#555" textLength="33.9" lengthAdjust="spacingAndGlyphs">UNDERGROUND</text>
<text x="1171.0" y="726.6" font-size="4.4" fill="#555" textLength="40.0" lengthAdjust="spacingAndGlyphs">ELECTRIC LINE</text>
<text x="1476.0" y="659.5" font-size="4.4" fill="#555" textLength="33.9" lengthAdjust="spacingAndGlyphs">UNDERGROUND</text>
<text x="1476.0" y="665.1" font-size="4.4" fill="#555" textLength="40.0" lengthAdjust="spacingAndGlyphs">ELECTRIC LINE</text>
<text x="897.0" y="596.0" font-size="4.4" fill="#555" textLength="15.4" lengthAdjust="spacingAndGlyphs">SPEED</text>
<text x="897.0" y="601.6" font-size="4.4" fill="#555" textLength="27.7" lengthAdjust="spacingAndGlyphs">BUMP TYP.</text>
<text x="1306.0" y="758.5" font-size="4.4" fill="#555" textLength="15.4" lengthAdjust="spacingAndGlyphs">SPEED</text>
<text x="1306.0" y="764.1" font-size="4.4" fill="#555" textLength="24.6" lengthAdjust="spacingAndGlyphs">BUMP TYP</text>
<text x="834.0" y="618.0" font-size="4.4" fill="#555" textLength="15.4" lengthAdjust="spacingAndGlyphs">GRASS</text>
<text x="895.0" y="634.0" font-size="4.4" fill="#555" textLength="24.6" lengthAdjust="spacingAndGlyphs">CONCRETE</text>
<text x="949.0" y="636.0" font-size="4.4" fill="#555" textLength="15.4" lengthAdjust="spacingAndGlyphs">GRASS</text>
<text x="951.0" y="704.0" font-size="4.4" fill="#555" textLength="15.4" lengthAdjust="spacingAndGlyphs">GRASS</text>
<text x="873.0" y="797.0" font-size="4.4" fill="#555" textLength="15.4" lengthAdjust="spacingAndGlyphs">GRASS</text>
<text x="1143.0" y="618.0" font-size="4.4" fill="#555" textLength="24.6" lengthAdjust="spacingAndGlyphs">CONCRETE</text>
<text x="1166.0" y="758.0" font-size="4.4" fill="#555" textLength="24.6" lengthAdjust="spacingAndGlyphs">CONCRETE</text>
<text x="1557.0" y="606.0" font-size="4.4" fill="#555" textLength="24.6" lengthAdjust="spacingAndGlyphs">CONCRETE</text>
<text x="1557.0" y="761.0" font-size="4.4" fill="#555" textLength="24.6" lengthAdjust="spacingAndGlyphs">CONCRETE</text>
<text x="1932.0" y="599.0" font-size="4.4" fill="#555" textLength="24.6" lengthAdjust="spacingAndGlyphs">CONCRETE</text>
<text x="1557.0" y="606.0" font-size="4.4" fill="#555" textLength="24.6" lengthAdjust="spacingAndGlyphs">CONCRETE</text>
<text x="927.0" y="780.0" font-size="4.4" fill="#555" textLength="24.6" lengthAdjust="spacingAndGlyphs">6&#x27; CHAIN</text>
<text x="927.0" y="785.6" font-size="4.4" fill="#555" textLength="30.8" lengthAdjust="spacingAndGlyphs">LINK FENCE</text>
<text x="1222.0" y="811.0" font-size="4.4" fill="#555" textLength="24.6" lengthAdjust="spacingAndGlyphs">6&#x27; CHAIN</text>
<text x="1222.0" y="816.6" font-size="4.4" fill="#555" textLength="30.8" lengthAdjust="spacingAndGlyphs">LINK FENCE</text>
<text x="1072.0" y="1027.0" font-size="4.4" fill="#555" textLength="24.6" lengthAdjust="spacingAndGlyphs">6&#x27; CHAIN</text>
<text x="1072.0" y="1032.6" font-size="4.4" fill="#555" textLength="30.8" lengthAdjust="spacingAndGlyphs">LINK FENCE</text>
<text x="1208.0" y="1319.0" font-size="4.4" fill="#555" textLength="24.6" lengthAdjust="spacingAndGlyphs">6&#x27; CHAIN</text>
<text x="1208.0" y="1324.6" font-size="4.4" fill="#555" textLength="30.8" lengthAdjust="spacingAndGlyphs">LINK FENCE</text>
<text x="1144.0" y="822.0" font-size="4.4" fill="#555" textLength="30.8" lengthAdjust="spacingAndGlyphs">BAND TOWER</text>
<text x="1271.0" y="828.0" font-size="4.4" fill="#555" textLength="12.3" lengthAdjust="spacingAndGlyphs">SHED</text>
<text x="1418.0" y="806.0" font-size="4.4" fill="#555" textLength="15.4" lengthAdjust="spacingAndGlyphs">BENCH</text>
<text x="1540.0" y="808.0" font-size="4.4" fill="#555" textLength="24.6" lengthAdjust="spacingAndGlyphs">BLEACHER</text>
<text x="1540.0" y="813.6" font-size="4.4" fill="#555" textLength="18.5" lengthAdjust="spacingAndGlyphs">(TYP.)</text>
<text x="1486.0" y="905.0" font-size="4.4" fill="#555" textLength="9.2" lengthAdjust="spacingAndGlyphs">NET</text>
<text x="1486.0" y="910.6" font-size="4.4" fill="#555" textLength="15.4" lengthAdjust="spacingAndGlyphs">(TYP)</text>
<text x="1472.0" y="1061.0" font-size="4.4" fill="#555" textLength="9.2" lengthAdjust="spacingAndGlyphs">NET</text>
<text x="1472.0" y="1066.6" font-size="4.4" fill="#555" textLength="15.4" lengthAdjust="spacingAndGlyphs">(TYP)</text>
<text x="1455.0" y="938.0" font-size="4.4" fill="#555" textLength="40.0" lengthAdjust="spacingAndGlyphs">TENNIS COURTS</text>
<text x="1455.0" y="1036.0" font-size="4.4" fill="#555" textLength="40.0" lengthAdjust="spacingAndGlyphs">TENNIS COURTS</text>
<text x="1408.0" y="975.0" font-size="4.4" fill="#555" textLength="27.7" lengthAdjust="spacingAndGlyphs">10&#x27; CHAIN</text>
<text x="1408.0" y="980.6" font-size="4.4" fill="#555" textLength="30.8" lengthAdjust="spacingAndGlyphs">LINK FENCE</text>
<text x="1400.0" y="1054.0" font-size="4.4" fill="#555" textLength="30.8" lengthAdjust="spacingAndGlyphs">BAND TOWER</text>
<text x="1532.0" y="993.0" font-size="4.4" fill="#555" textLength="30.8" lengthAdjust="spacingAndGlyphs">10&#x27; C.L.F.</text>
<text x="803.0" y="682.0" font-size="4.4" fill="#555" textLength="15.4" lengthAdjust="spacingAndGlyphs">INLET</text>
<text x="803.0" y="687.6" font-size="4.4" fill="#555" textLength="21.6" lengthAdjust="spacingAndGlyphs">=101.52</text>
<text x="803.0" y="693.2" font-size="4.4" fill="#555" textLength="18.5" lengthAdjust="spacingAndGlyphs">=99.89</text>
<text x="803.0" y="698.8" font-size="4.4" fill="#555" textLength="21.6" lengthAdjust="spacingAndGlyphs">DEBRIS)</text>
<text x="803.0" y="723.0" font-size="4.4" fill="#555" textLength="21.6" lengthAdjust="spacingAndGlyphs">&quot; INLET</text>
<text x="803.0" y="728.6" font-size="4.4" fill="#555" textLength="21.6" lengthAdjust="spacingAndGlyphs">=102.91</text>
<text x="803.0" y="734.2" font-size="4.4" fill="#555" textLength="21.6" lengthAdjust="spacingAndGlyphs">) 99.54</text>
<text x="803.0" y="739.8" font-size="4.4" fill="#555" textLength="21.6" lengthAdjust="spacingAndGlyphs">) 99.28</text>
<text x="803.0" y="753.0" font-size="4.4" fill="#555" textLength="15.4" lengthAdjust="spacingAndGlyphs">INLET</text>
<text x="803.0" y="758.6" font-size="4.4" fill="#555" textLength="18.5" lengthAdjust="spacingAndGlyphs">102.90</text>
<text x="803.0" y="764.2" font-size="4.4" fill="#555" textLength="15.4" lengthAdjust="spacingAndGlyphs">99.38</text>
<text x="803.0" y="769.8" font-size="4.4" fill="#555" textLength="15.4" lengthAdjust="spacingAndGlyphs">98.95</text>
<text x="806.0" y="869.0" font-size="4.4" fill="#555" textLength="18.5" lengthAdjust="spacingAndGlyphs">S.S.E.</text>
<text x="806.0" y="874.6" font-size="4.4" fill="#555" textLength="18.5" lengthAdjust="spacingAndGlyphs">034860</text>
<text x="808.0" y="897.0" font-size="4.4" fill="#555" textLength="40.0" lengthAdjust="spacingAndGlyphs">SAN. SWR. MH.</text>
<text x="808.0" y="902.6" font-size="4.4" fill="#555" textLength="27.7" lengthAdjust="spacingAndGlyphs">TR=103.44</text>
<text x="808.0" y="908.2" font-size="4.4" fill="#555" textLength="61.6" lengthAdjust="spacingAndGlyphs">FL 10&quot; PVC (N) 94.67</text>
<text x="808.0" y="913.8" font-size="4.4" fill="#555" textLength="61.6" lengthAdjust="spacingAndGlyphs">FL 10&quot; PVC (S) 94.72</text>
<text x="1822.0" y="1002.0" font-size="4.4" fill="#555" textLength="24.6" lengthAdjust="spacingAndGlyphs">6&#x27; CHAIN</text>
<text x="1822.0" y="1007.6" font-size="4.4" fill="#555" textLength="30.8" lengthAdjust="spacingAndGlyphs">LINK FENCE</text>
<text x="1948.0" y="1002.0" font-size="4.4" fill="#555" text-anchor="middle" textLength="24.6" lengthAdjust="spacingAndGlyphs">8&#x27; CHAIN</text>
<text x="1948.0" y="1007.6" font-size="4.4" fill="#555" text-anchor="middle" textLength="30.8" lengthAdjust="spacingAndGlyphs">LINK FENCE</text>
<text x="1766.0" y="988.0" font-size="4.4" fill="#555" textLength="12.3" lengthAdjust="spacingAndGlyphs">SHED</text>
<text x="1825.0" y="1048.0" font-size="4.4" fill="#555" textLength="27.7" lengthAdjust="spacingAndGlyphs">GOAL POST</text>
<text x="1886.0" y="928.0" font-size="4.4" fill="#555" text-anchor="middle" textLength="27.7" lengthAdjust="spacingAndGlyphs">ONE STORY</text>
<text x="1886.0" y="933.6" font-size="4.4" fill="#555" text-anchor="middle" textLength="43.1" lengthAdjust="spacingAndGlyphs">METAL BUILDING</text>
<text x="1875.0" y="820.0" font-size="4.4" fill="#555" textLength="24.6" lengthAdjust="spacingAndGlyphs">CONCRETE</text>
<text x="1925.0" y="833.0" font-size="4.4" fill="#555" textLength="40.0" lengthAdjust="spacingAndGlyphs">4&#x27; WOOD FENCE</text>
<text x="1815.0" y="837.0" font-size="4.4" fill="#555" textLength="27.7" lengthAdjust="spacingAndGlyphs">WOOD POST</text>
<text x="1102.0" y="1285.0" font-size="4.4" fill="#555" textLength="33.9" lengthAdjust="spacingAndGlyphs">GRATE INLET</text>
<text x="1102.0" y="1290.6" font-size="4.4" fill="#555" textLength="27.7" lengthAdjust="spacingAndGlyphs">TG=101.78</text>
<text x="1102.0" y="1296.2" font-size="4.4" fill="#555" textLength="61.6" lengthAdjust="spacingAndGlyphs">FL 24&quot; HDP (S) 94.64</text>
<text x="949.0" y="1342.0" font-size="4.4" fill="#555" textLength="33.9" lengthAdjust="spacingAndGlyphs">GRATE INLET</text>
<text x="949.0" y="1347.6" font-size="4.4" fill="#555" textLength="27.7" lengthAdjust="spacingAndGlyphs">TG=101.22</text>
<text x="949.0" y="1353.2" font-size="4.4" fill="#555" textLength="70.8" lengthAdjust="spacingAndGlyphs">MEASURE TO BOTTOM=99.52</text>
<text x="949.0" y="1358.8" font-size="4.4" fill="#555" textLength="61.6" lengthAdjust="spacingAndGlyphs">(FILLED WITH DEBRIS)</text>
<text x="1410.0" y="1233.0" font-size="4.4" fill="#555" textLength="33.9" lengthAdjust="spacingAndGlyphs">GRATE INLET</text>
<text x="1410.0" y="1238.6" font-size="4.4" fill="#555" textLength="27.7" lengthAdjust="spacingAndGlyphs">TG=101.33</text>
<text x="1410.0" y="1244.2" font-size="4.4" fill="#555" textLength="61.6" lengthAdjust="spacingAndGlyphs">FL 24&quot; HDP (S) 97.95</text>
<text x="1758.0" y="1158.0" font-size="4.4" fill="#555" textLength="33.9" lengthAdjust="spacingAndGlyphs">GRATE INLET</text>
<text x="1758.0" y="1163.6" font-size="4.4" fill="#555" textLength="27.7" lengthAdjust="spacingAndGlyphs">TG=102.70</text>
<text x="1758.0" y="1169.2" font-size="4.4" fill="#555" textLength="61.6" lengthAdjust="spacingAndGlyphs">FL 24&quot; RCP (N) 98.50</text>
<text x="1758.0" y="1174.8" font-size="4.4" fill="#555" textLength="61.6" lengthAdjust="spacingAndGlyphs">FL 24&quot; RCP (S) 98.52</text>
<text x="1758.0" y="1180.4" font-size="4.4" fill="#555" textLength="64.7" lengthAdjust="spacingAndGlyphs">FL 12&quot; HDP (NW) 99.48</text>
<text x="1750.0" y="1328.0" font-size="4.4" fill="#555" textLength="33.9" lengthAdjust="spacingAndGlyphs">GRATE INLET</text>
<text x="1750.0" y="1333.6" font-size="4.4" fill="#555" textLength="27.7" lengthAdjust="spacingAndGlyphs">TG=102.44</text>
<text x="1750.0" y="1339.2" font-size="4.4" fill="#555" textLength="61.6" lengthAdjust="spacingAndGlyphs">FL 24&quot; RCP (N) 98.14</text>
<text x="1750.0" y="1344.8" font-size="4.4" fill="#555" textLength="61.6" lengthAdjust="spacingAndGlyphs">FL 24&quot; RCP (S) 98.08</text>
<text x="1750.0" y="1350.4" font-size="4.4" fill="#555" textLength="64.7" lengthAdjust="spacingAndGlyphs">FL 15&quot; HDP (NW) 98.10</text>
<text x="894.0" y="1485.0" font-size="4.4" fill="#555" textLength="37.0" lengthAdjust="spacingAndGlyphs">SAN. SWR. MH</text>
<text x="894.0" y="1490.6" font-size="4.4" fill="#555" textLength="27.7" lengthAdjust="spacingAndGlyphs">TR=104.07</text>
<text x="894.0" y="1496.2" font-size="4.4" fill="#555" textLength="58.5" lengthAdjust="spacingAndGlyphs">FL 6&quot; PVC (E) 95.84</text>
<text x="894.0" y="1501.8" font-size="4.4" fill="#555" textLength="70.8" lengthAdjust="spacingAndGlyphs">MEASURE TO BOTTOM=93.36</text>
<text x="894.0" y="1507.4" font-size="4.4" fill="#555" textLength="58.5" lengthAdjust="spacingAndGlyphs">(FILLED WITH WATER)</text>
<text x="1242.0" y="1491.0" font-size="4.4" fill="#555" text-anchor="end" textLength="40.0" lengthAdjust="spacingAndGlyphs">SAN. SWR. MH.</text>
<text x="1242.0" y="1496.6" font-size="4.4" fill="#555" text-anchor="end" textLength="27.7" lengthAdjust="spacingAndGlyphs">TR=104.29</text>
<text x="1242.0" y="1502.2" font-size="4.4" fill="#555" text-anchor="end" textLength="58.5" lengthAdjust="spacingAndGlyphs">FL 6&quot; PVC (W) 97.67</text>
<text x="1242.0" y="1507.8" font-size="4.4" fill="#555" text-anchor="end" textLength="58.5" lengthAdjust="spacingAndGlyphs">FL 6&quot; PVC (E) 96.92</text>
<text x="1638.0" y="1488.0" font-size="4.4" fill="#555" text-anchor="end" textLength="40.0" lengthAdjust="spacingAndGlyphs">SAN. SWR. MH.</text>
<text x="1638.0" y="1493.6" font-size="4.4" fill="#555" text-anchor="end" textLength="27.7" lengthAdjust="spacingAndGlyphs">TR=104.17</text>
<text x="1638.0" y="1499.2" font-size="4.4" fill="#555" text-anchor="end" textLength="58.5" lengthAdjust="spacingAndGlyphs">FL 6&quot; PVC (W) 99.81</text>
<text x="1638.0" y="1504.8" font-size="4.4" fill="#555" text-anchor="end" textLength="61.6" lengthAdjust="spacingAndGlyphs">FL 3&quot; PVC (N) 100.21</text>
<text x="1716.0" y="1488.0" font-size="4.4" fill="#555" textLength="40.0" lengthAdjust="spacingAndGlyphs">STM. SWR. MH.</text>
<text x="1716.0" y="1493.6" font-size="4.4" fill="#555" textLength="27.7" lengthAdjust="spacingAndGlyphs">TR=102.63</text>
<text x="1716.0" y="1499.2" font-size="4.4" fill="#555" textLength="64.7" lengthAdjust="spacingAndGlyphs">FL 24&quot; RCP (NW) 97.75</text>
<text x="1716.0" y="1504.8" font-size="4.4" fill="#555" textLength="61.6" lengthAdjust="spacingAndGlyphs">FL 24&quot; RCP (E) 97.76</text>
<text x="1122.0" y="1375.0" font-size="4.4" fill="#555" textLength="27.7" lengthAdjust="spacingAndGlyphs">RETENTION</text>
<text x="1122.0" y="1380.6" font-size="4.4" fill="#555" textLength="12.3" lengthAdjust="spacingAndGlyphs">POND</text>
<text x="1487.0" y="1354.0" font-size="3.2" fill="#555" textLength="20.2" lengthAdjust="spacingAndGlyphs">RETENTION</text>
<text x="1487.0" y="1358.0" font-size="3.2" fill="#555" textLength="9.0" lengthAdjust="spacingAndGlyphs">POND</text>
<text x="868.0" y="1109.0" font-size="4.4" fill="#555" textLength="15.4" lengthAdjust="spacingAndGlyphs">GRASS</text>
<text x="1229.0" y="1077.0" font-size="4.4" fill="#555" textLength="15.4" lengthAdjust="spacingAndGlyphs">GRASS</text>
<text x="1500.0" y="1199.0" font-size="4.4" fill="#555" textLength="15.4" lengthAdjust="spacingAndGlyphs">GRASS</text>
<text x="1872.0" y="1203.0" font-size="4.4" fill="#555" textLength="15.4" lengthAdjust="spacingAndGlyphs">GRASS</text>
<text x="1676.0" y="1387.0" font-size="4.4" fill="#555" textLength="15.4" lengthAdjust="spacingAndGlyphs">GRASS</text>
<text x="894.0" y="1305.0" font-size="4.4" fill="#555" textLength="15.4" lengthAdjust="spacingAndGlyphs" transform="rotate(-90 894.0 1305.0)">SWALE</text>
<text x="1739.0" y="1283.0" font-size="4.4" fill="#555" textLength="15.4" lengthAdjust="spacingAndGlyphs" transform="rotate(-90 1739.0 1283.0)">SWALE</text>
<text x="1072.0" y="1441.0" font-size="4.4" fill="#555" textLength="18.5" lengthAdjust="spacingAndGlyphs">4&quot; PVC</text>
<text x="1318.0" y="1441.0" font-size="4.4" fill="#555" textLength="18.5" lengthAdjust="spacingAndGlyphs">6&quot; PVC</text>
<text x="1518.0" y="1441.0" font-size="4.4" fill="#555" textLength="18.5" lengthAdjust="spacingAndGlyphs">4&quot; PVC</text>
<text x="911.0" y="1428.3" font-size="3" fill="#555">OHE</text>
<text x="975.0" y="1428.6" font-size="3" fill="#555">OHE</text>
<text x="1041.0" y="1428.9" font-size="3" fill="#555">OHE</text>
<text x="1106.0" y="1429.1" font-size="3" fill="#555">OHE</text>
<text x="1173.0" y="1429.4" font-size="3" fill="#555">OHE</text>
<text x="1254.0" y="1429.7" font-size="3" fill="#555">OHE</text>
<text x="1321.0" y="1430.0" font-size="3" fill="#555">OHE</text>
<text x="1388.0" y="1430.2" font-size="3" fill="#555">OHE</text>
<text x="1590.0" y="1431.1" font-size="3" fill="#555">OHE</text>
<text x="1694.0" y="1431.5" font-size="3" fill="#555">OHE</text>
<text x="1797.0" y="1431.9" font-size="3" fill="#555">OHE</text>
<text x="1925.0" y="1432.4" font-size="3" fill="#555">OHE</text>
<text x="1675.5" y="1300.0" font-size="4.2" fill="#555" text-anchor="middle" textLength="26.5" lengthAdjust="spacingAndGlyphs" transform="rotate(-90 1675.5 1300.0)">ONE STORY</text>
<text x="1675.5" y="1305.6" font-size="4.2" fill="#555" text-anchor="middle" textLength="41.2" lengthAdjust="spacingAndGlyphs" transform="rotate(-90 1675.5 1305.6)">METAL BUILDING</text>
<text x="1573.0" y="1193.0" font-size="4.4" fill="#a55" text-anchor="middle" textLength="27.7" lengthAdjust="spacingAndGlyphs">RESTROOMS</text>
<text x="822.0" y="635.0" font-size="6.3" fill="#222" textLength="78.5" lengthAdjust="spacingAndGlyphs" transform="rotate(-90 822.0 635.0)">N03°11&#x27;39&quot;W   1126.17&#x27;</text>
<text x="820.5" y="1177.5" font-size="6.3" fill="#222" textLength="78.0" lengthAdjust="spacingAndGlyphs" transform="rotate(-90 820.5 1177.5)">N03°11&#x27;39&quot;W   1126.17&#x27;</text>
<text x="1041.0" y="1486.5" font-size="6.3" fill="#222" textLength="80.0" lengthAdjust="spacingAndGlyphs">S86°44&#x27;01&quot;W   1830.46&#x27;</text>
<text x="1982.0" y="1486.0" font-size="6.3" fill="#222">S</text>
<text x="762.5" y="1638.5" font-size="6.2" fill="#666" textLength="117.0" lengthAdjust="spacingAndGlyphs" transform="rotate(-90 762.5 1638.5)">02 Jan 2025  2:15PM BrianReed</text>
<text x="771.6" y="1638.5" font-size="6.2" fill="#666" textLength="651.0" lengthAdjust="spacingAndGlyphs" transform="rotate(-90 771.6 1638.5)">C:\Users\BrianReed\OneDrive - Talon Engineering LLC\Talon Engineering\Projects\VLK Architects\655-0004 New Caney ISD Extracurricular Phase 3\Civil\_DEMOLITION PLAN.dwg</text>
<text x="780.8" y="1638.5" font-size="6.2" fill="#666" textLength="197.0" lengthAdjust="spacingAndGlyphs" transform="rotate(-90 780.8 1638.5)">Includes Xref(s):  X-TOPO.dwg;  X-SITE.dwg;  X-TB.dwg</text>
<path d="M1381 813.500L1399 826L1404 804M1399 826L1410 806M1474 811L1500 826M1605.500 811.500L1636 826M1166 828L1186 811M1278 836L1289 822M1694 810L1714 790M1694.500 955L1714 935M1385 860L1396 850M1385.500 1018L1397 1006M1385 1097L1397 1086M1486.500 911L1502 897M1486.500 911L1499 921M1500 916H1545M1531 901L1533 915M1666 887L1686 872M1666 894L1677 903M1666 1045L1686 1031M1666 1052L1677 1062M1477.500 1066.500L1493 1053M1477.500 1073L1489 1083M1503 1056L1501 1070M1369 1069L1386 1056M1387 1179L1405 1166M1484 1249L1503 1236M1566.500 1240L1582 1234M1593 1250L1618 1245L1640 1196M1594.500 1137L1612 1162M1594 1275L1603 1277L1610 1296M1675.500 1163L1696 1144M1056.500 1324L1081 1297M873.500 1399L892 1388M1347.500 1264L1368 1249M1621 1349L1639 1371M1602 1397L1615 1388M1687 1354L1697 1347M1695.500 1391L1714 1375M1744 1368L1769 1385M1826 1027L1853 1044M968 849.500L960 853M1046 611L1026 601.500M1738 751L1718 776M1029 757L1008 776M1237 612L1257 602M1266 553L1258 530M1490 605L1490 624M1601 636L1606 627M1771 555L1780 528M1812 641L1784 627M948 1340L896 1384M1101 1283L1082 1305M1409 1231L1371 1247M1757 1157L1720 1180M1749 1326L1719 1347" fill="none" stroke="#333" stroke-width=".8"/>
<path d="M2089.600 533.800L2092 560L2089.600 575L2087.200 560ZM2089.600 575L2092.500 600L2089.600 631L2086.700 600Z" fill="#fff" stroke="#222" stroke-width=".9"/><path d="M2089.600 533.800L2092 560L2089.600 575ZM2089.600 575L2086.700 600L2089.600 631Z" fill="#222"/>
<circle cx="2088.500" cy="580.500" r="3.800" fill="#fff" stroke="#222" stroke-width=".9"/><path d="M2088.500 576.700A3.800 3.800 0 0 1 2092.300 580.500H2088.500ZM2088.500 584.300A3.800 3.800 0 0 1 2084.700 580.500H2088.500Z" fill="#222"/>
<rect x="2046" y="649.500" width="78.700" height="9.500" fill="#fff" stroke="#222" stroke-width=".8"/>
<rect x="2046" y="649.5" width="7.9" height="4.75" fill="#111"/>
<rect x="2053.9" y="654.25" width="7.9" height="4.75" fill="#111"/>
<rect x="2061.8" y="649.5" width="7.9" height="4.75" fill="#111"/>
<rect x="2069.7" y="654.25" width="7.9" height="4.75" fill="#111"/>
<rect x="2077.6" y="649.5" width="7.9" height="4.75" fill="#111"/>
<rect x="2085.5" y="654.25" width="19.6" height="4.75" fill="#111"/>
<rect x="2105.1" y="649.5" width="19.6" height="4.75" fill="#111"/>
<text x="2046.0" y="647.5" font-size="3.5" fill="#222" text-anchor="middle">30</text>
<text x="2085.5" y="647.5" font-size="3.5" fill="#222" text-anchor="middle">0</text>
<text x="2105.0" y="647.5" font-size="3.5" fill="#222" text-anchor="middle">15</text>
<text x="2124.5" y="647.5" font-size="3.5" fill="#222" text-anchor="middle">30</text>
<text x="2085.5" y="665.8" font-size="4.3" fill="#222" text-anchor="middle" textLength="38.0" lengthAdjust="spacingAndGlyphs">SCALE: 1&quot;= 30&#x27;</text>
<text x="2062.7" y="699.0" font-size="7.5" fill="#333" text-anchor="middle" textLength="35.0" lengthAdjust="spacingAndGlyphs">LEGEND:</text>
<path d="M2045 700.500H2080.500" stroke="#333" stroke-width=".6"/>
<rect x="2019" y="715.600" width="38" height="4.800" fill="#fff" stroke="#333" stroke-width=".7"/>
<path d="M2023.8 715.600v4.800M2028.5 715.600v4.800M2033.2 715.600v4.800M2038.0 715.600v4.800M2042.8 715.600v4.800M2047.5 715.600v4.800M2052.2 715.600v4.800M2019 718h38" stroke="#333" stroke-width=".6"/>
<rect x="2004" y="729.500" width="56.600" height="20.300" fill="url(#hA2)" stroke="#222" stroke-width="1"/>
<rect x="2004" y="761" width="56.600" height="19" fill="url(#hB)" stroke="#333" stroke-width=".9"/>
<rect x="2004" y="789.500" width="56.600" height="19.500" fill="url(#hX2)" stroke="#222" stroke-width="1"/>
<path d="M2005 824.300H2027M2042 824.300H2063" stroke="#111" stroke-width="3.200"/>
<text x="2076.0" y="714.8" font-size="5" fill="#333" textLength="65.5" lengthAdjust="spacingAndGlyphs">EXIST. UNDERGROUND</text>
<text x="2076.0" y="721.8" font-size="5" fill="#333" textLength="83.7" lengthAdjust="spacingAndGlyphs">UTILITIES TO BE REMOVED</text>
<text x="2076.0" y="739.0" font-size="5" fill="#333" textLength="83.7" lengthAdjust="spacingAndGlyphs">EXISTING PAVEMENT TO BE</text>
<text x="2076.0" y="746.0" font-size="5" fill="#333" textLength="25.5" lengthAdjust="spacingAndGlyphs">REMOVED</text>
<text x="2076.0" y="770.0" font-size="5" fill="#333" textLength="83.7" lengthAdjust="spacingAndGlyphs">EXISTING BUILDING TO BE</text>
<text x="2076.0" y="777.0" font-size="5" fill="#333" textLength="25.5" lengthAdjust="spacingAndGlyphs">REMOVED</text>
<text x="2076.0" y="793.8" font-size="5" fill="#333" textLength="94.6" lengthAdjust="spacingAndGlyphs">EXISTING POND TO BE FILLED</text>
<text x="2076.0" y="800.8" font-size="5" fill="#333" textLength="76.4" lengthAdjust="spacingAndGlyphs">IN PER SHEETS C2.01 &amp;</text>
<text x="2076.0" y="807.4" font-size="5" fill="#333" textLength="18.2" lengthAdjust="spacingAndGlyphs">C3.03</text>
<text x="2076.0" y="825.8" font-size="5" fill="#333" textLength="65.5" lengthAdjust="spacingAndGlyphs">LIMITS OF CLEARING</text>
<text x="2088.0" y="855.0" font-size="7.3" fill="#333" text-anchor="middle" textLength="112.0" lengthAdjust="spacingAndGlyphs">KEYED NOTES TO SHEET:</text>
<path d="M2032 856.500H2144.500" stroke="#333" stroke-width=".6"/>
<circle cx="2011.800" cy="870.6" r="3.800" fill="#fff" stroke="#333" stroke-width=".7"/>
<text x="2011.8" y="872.3" font-size="4.8" fill="#333" text-anchor="middle">1</text>
<text x="2021.0" y="872.3" font-size="4.9" fill="#333" textLength="100.1" lengthAdjust="spacingAndGlyphs">EXISTING TREES TO BE REMOVED.</text>
<circle cx="2011.800" cy="888.8" r="3.800" fill="#fff" stroke="#333" stroke-width=".7"/>
<text x="2011.8" y="890.5" font-size="4.8" fill="#333" text-anchor="middle">2</text>
<text x="2021.0" y="888.0" font-size="4.9" fill="#333" textLength="144.9" lengthAdjust="spacingAndGlyphs">ALL EXISTING IRRIGATION LINES &amp; IRRIGATION</text>
<text x="2021.0" y="894.6" font-size="4.9" fill="#333" textLength="120.8" lengthAdjust="spacingAndGlyphs">CONTROL APPURTENANCES TO BE REMOVED</text>
<text x="2021.0" y="900.8" font-size="4.9" fill="#333" textLength="141.5" lengthAdjust="spacingAndGlyphs">THAT ARE LOCATED WITHIN FIELD. CONTRACTOR</text>
<text x="2021.0" y="907.4" font-size="4.9" fill="#333" textLength="138.0" lengthAdjust="spacingAndGlyphs">SHALL CAP ALL EXISTING IRRIGATION LINES.</text>
<text x="2021.0" y="914.1" font-size="4.9" fill="#333" textLength="31.1" lengthAdjust="spacingAndGlyphs">(TYPICAL)</text>
<text x="2021.0" y="920.7" font-size="4.9" fill="#333" textLength="131.1" lengthAdjust="spacingAndGlyphs">CONTRACTOR SHALL COORDINATE WITH OWNER</text>
<text x="2021.0" y="927.7" font-size="4.9" fill="#333" textLength="144.9" lengthAdjust="spacingAndGlyphs">FOR FIRST RIGHT OF REFUSAL ON ALL EXISTING</text>
<text x="2021.0" y="934.3" font-size="4.9" fill="#333" textLength="134.6" lengthAdjust="spacingAndGlyphs">IRRIGATION EQUIPMENT &amp; SPRINKLER HEADS.</text>
<text x="2021.0" y="943.8" font-size="4.9" fill="#333" textLength="134.6" lengthAdjust="spacingAndGlyphs">CONTRACTOR SHALL COORDINATE WITH SCHOOL</text>
<text x="2021.0" y="950.5" font-size="4.9" fill="#333" textLength="141.5" lengthAdjust="spacingAndGlyphs">MAINTENANCE DEPARTMENT TO ENSURE EXISTING</text>
<text x="2021.0" y="956.7" font-size="4.9" fill="#333" textLength="155.2" lengthAdjust="spacingAndGlyphs">IRRIGATION OUTSIDE OF THE LIMITS OF THE FIELD</text>
<text x="2021.0" y="963.3" font-size="4.9" fill="#333" textLength="165.6" lengthAdjust="spacingAndGlyphs">REMAINS OPERATIONAL AFTER DEMOLITION OF EXISTING</text>
<text x="2021.0" y="969.9" font-size="4.9" fill="#333" textLength="79.4" lengthAdjust="spacingAndGlyphs">FIELD IRRIGATION LINES.</text>
<circle cx="2011.800" cy="980.2" r="3.800" fill="#fff" stroke="#333" stroke-width=".7"/>
<text x="2011.8" y="981.9" font-size="4.8" fill="#333" text-anchor="middle">3</text>
<text x="2021.0" y="981.9" font-size="4.9" fill="#333" textLength="120.8" lengthAdjust="spacingAndGlyphs">EXISTING WATER METER TO BE REMOVED.</text>
<circle cx="2011.800" cy="991.8" r="3.800" fill="#fff" stroke="#333" stroke-width=".7"/>
<text x="2011.8" y="993.5" font-size="4.8" fill="#333" text-anchor="middle">4</text>
<text x="2021.0" y="993.5" font-size="4.9" fill="#333" textLength="100.1" lengthAdjust="spacingAndGlyphs">EXISTING MISC. SITE EQUIPMENT</text>
<text x="2021.0" y="999.7" font-size="4.9" fill="#333" textLength="48.3" lengthAdjust="spacingAndGlyphs">TO BE REMOVED.</text>
<circle cx="2011.800" cy="1009.6" r="3.800" fill="#fff" stroke="#333" stroke-width=".7"/>
<text x="2011.8" y="1011.3" font-size="4.8" fill="#333" text-anchor="middle">5</text>
<text x="2021.0" y="1011.3" font-size="4.9" fill="#333" textLength="144.9" lengthAdjust="spacingAndGlyphs">EXISTING ENTIRE TENNIS COURT SLAB &amp; LIGHTS</text>
<text x="2021.0" y="1017.5" font-size="4.9" fill="#333" textLength="44.9" lengthAdjust="spacingAndGlyphs">TO BE REMOVED</text>
<circle cx="2011.800" cy="1027.8" r="3.800" fill="#fff" stroke="#333" stroke-width=".7"/>
<text x="2011.8" y="1029.5" font-size="4.8" fill="#333" text-anchor="middle">6</text>
<text x="2021.0" y="1029.5" font-size="4.9" fill="#333" textLength="117.3" lengthAdjust="spacingAndGlyphs">EXISTING STORM SEWER TO BE REMOVED</text>
<circle cx="2011.800" cy="1041.4" r="3.800" fill="#fff" stroke="#333" stroke-width=".7"/>
<text x="2011.8" y="1043.1" font-size="4.8" fill="#333" text-anchor="middle">7</text>
<text x="2021.0" y="1043.1" font-size="4.9" fill="#333" textLength="144.9" lengthAdjust="spacingAndGlyphs">EXISTING HEADWALLS TO BE REMOVED. EXISTING</text>
<text x="2021.0" y="1049.3" font-size="4.9" fill="#333" textLength="131.1" lengthAdjust="spacingAndGlyphs">STORM SEWER TO BE REROUTED AS SHOWN ON</text>
<text x="2021.0" y="1056.0" font-size="4.9" fill="#333" textLength="144.9" lengthAdjust="spacingAndGlyphs">SHEETS C3.01 &amp; C3.02. HIGHBANK OF EXISTING</text>
<text x="2021.0" y="1062.7" font-size="4.9" fill="#333" textLength="127.7" lengthAdjust="spacingAndGlyphs">POND TO BE RESHAPED AS SHOWN ON SHEET</text>
<text x="2021.0" y="1069.2" font-size="4.9" fill="#333" textLength="20.7" lengthAdjust="spacingAndGlyphs">C1.02.</text>
<circle cx="2011.800" cy="1080.9" r="3.800" fill="#fff" stroke="#333" stroke-width=".7"/>
<text x="2011.8" y="1082.6" font-size="4.8" fill="#333" text-anchor="middle">8</text>
<text x="2021.0" y="1082.6" font-size="4.9" fill="#333" textLength="113.9" lengthAdjust="spacingAndGlyphs">EXISTING POWER POLE TO BE REMOVED</text>
<circle cx="2011.800" cy="1096.4" r="3.800" fill="#fff" stroke="#333" stroke-width=".7"/>
<text x="2011.8" y="1098.1" font-size="4.8" fill="#333" text-anchor="middle">9</text>
<text x="2021.0" y="1098.1" font-size="4.9" fill="#333" textLength="120.8" lengthAdjust="spacingAndGlyphs">EXISTING BAND TOWER TO BE SALVAGED.</text>
<text x="2021.0" y="1104.7" font-size="4.9" fill="#333" textLength="131.1" lengthAdjust="spacingAndGlyphs">COORDINATE WITH OWNER ON NEW RELOCATED</text>
<text x="2021.0" y="1111.0" font-size="4.9" fill="#333" textLength="31.1" lengthAdjust="spacingAndGlyphs">LOCATION.</text>
<path d="M2200.200 513V1640.500M2200.200 534.300H2340.500M2200.200 596.400H2340.500M2200.200 1124.800H2297M2200.200 1173.200H2297M2200.200 1250.800H2297M2200.200 1293.500H2297M2200.200 1400.300H2297M2297 1562.200H2340.500" fill="none" stroke="#555" stroke-width="1"/>
<path d="M2270.500 540.400L2290.300 574.200H2251Z" fill="#231f20"/>
<path d="M2270.500 553c5 1 8 5 7.500 10c-2-3.500-5-4.500-8-3.500c1.500-2 1.500-4.500.500-6.500zM2263 569.500c1.500-5 5.500-7.500 10.500-6.500c-3.500 2-4.500 5-3.500 8c-2.500-1.500-5-2-7-1.500zM2280 569c-4.500 1.500-9 0-11-4.500c3.500 1.500 6.500.500 8.500-2c.500 2.500 1.200 4.800 2.500 6.500z" fill="#fff"/>
<text x="2207.8" y="589.9" font-size="11.8" fill="#333" textLength="31.0" lengthAdjust="spacing" font-family="'Liberation Serif',serif">VLK</text>
<path d="M2242.500 578.500V592" stroke="#222" stroke-width="1"/>
<text x="2246.5" y="589.9" font-size="11.8" fill="#333" textLength="88.0" lengthAdjust="spacing" font-family="'Liberation Serif',serif">ARCHITECTS</text>
<rect x="2200.2" y="620.1" width="96.6" height="11.5" fill="#231f20"/><text x="2248.5" y="628.5" font-size="7.3" fill="#fff" text-anchor="middle">ARCHITECT</text>
<text x="2205.4" y="641.8" font-size="7" fill="#222" textLength="63.6" lengthAdjust="spacingAndGlyphs" font-weight="700">VLK Architects, Inc.</text>
<text x="2205.4" y="649.8" font-size="5.3" fill="#333" textLength="72.5" lengthAdjust="spacingAndGlyphs">20445 State Hwy 249, Suite 350</text>
<text x="2205.4" y="657.8" font-size="5.3" fill="#333" textLength="52.0" lengthAdjust="spacingAndGlyphs">Houston, Texas  77070</text>
<text x="2205.4" y="665.6" font-size="5.3" fill="#333" textLength="60.5" lengthAdjust="spacingAndGlyphs">Main Phone: 281.671.2300</text>
<text x="2205.4" y="673.3" font-size="5.3" fill="#333" textLength="51.5" lengthAdjust="spacingAndGlyphs">www.vlkarchitects.com</text>
<rect x="2200.2" y="680.2" width="96.6" height="11.3" fill="#231f20"/><text x="2248.5" y="688.5" font-size="7.3" fill="#fff" text-anchor="middle">CIVIL ENGINEER</text>
<text x="2205.4" y="702.0" font-size="7" fill="#222" textLength="75.6" lengthAdjust="spacingAndGlyphs" font-weight="700">Talon Engineering, LLC</text>
<text x="2205.4" y="710.0" font-size="5.3" fill="#333" textLength="37.5" lengthAdjust="spacingAndGlyphs">1118 Wolf&#x27;s Knoll</text>
<text x="2205.4" y="717.8" font-size="5.3" fill="#333" textLength="52.0" lengthAdjust="spacingAndGlyphs">Houston, Texas  77094</text>
<text x="2205.4" y="725.8" font-size="5.3" fill="#333" textLength="60.5" lengthAdjust="spacingAndGlyphs">Main Phone: 832.287.9874</text>
<text x="2205.4" y="733.6" font-size="5.3" fill="#333" textLength="42.5" lengthAdjust="spacingAndGlyphs">www.talonclvil.com</text>
<rect x="2302.500" y="619.600" width="38.100" height="942.600" fill="#231f20"/>
<text x="2319.3" y="713.2" font-size="12" fill="#fff" textLength="80.6" lengthAdjust="spacingAndGlyphs" transform="rotate(-90 2319.3 713.2)">NEW CANEY ISD</text>
<text x="2332.1" y="732.3" font-size="12" fill="#fff" textLength="99.7" lengthAdjust="spacingAndGlyphs" transform="rotate(-90 2332.1 732.3)">NEW CANEY, TEXAS</text>
<text x="2318.1" y="1552.5" font-size="18.4" fill="#fff" textLength="542.5" lengthAdjust="spacingAndGlyphs" font-weight="700" transform="rotate(-90 2318.1 1552.5)">NEW CANEY HIGH SCHOOL EXTRACURRICULAR IMPROVEMENTS</text>
<text x="2337.2" y="1552.5" font-size="18.4" fill="#fff" textLength="74.2" lengthAdjust="spacingAndGlyphs" font-weight="700" transform="rotate(-90 2337.2 1552.5)">PHASE III</text>
<text x="2298.0" y="1179.0" font-size="3.8" fill="#333" text-anchor="end" textLength="58.0" lengthAdjust="spacingAndGlyphs">TALON ENGINEERING, LLC</text>
<text x="2279.0" y="1185.3" font-size="3.8" fill="#333" text-anchor="end" textLength="20.0" lengthAdjust="spacingAndGlyphs">F-24281</text>
<circle cx="2270.600" cy="1219" r="27.200" fill="none" stroke="#555" stroke-width="1"/><circle cx="2270.600" cy="1219" r="25.500" fill="none" stroke="#666" stroke-width=".6" stroke-dasharray="1 1"/><circle cx="2270.600" cy="1219" r="18.500" fill="none" stroke="#666" stroke-width=".7"/>
<path id="sealarc" d="M2250.600 1226A21.500 21.500 0 0 1 2290.600 1226" fill="none"/><path id="sealarc2" d="M2249.500 1222A22.500 22.500 0 0 0 2291.700 1222" fill="none"/>
<text font-size="4.300" fill="#444" letter-spacing=".6"><textPath href="#sealarc" startOffset="6">STATE OF TEXAS</textPath></text>
<text font-size="3.800" fill="#444" letter-spacing=".3"><textPath href="#sealarc2" startOffset="3">PROFESSIONAL ENGINEER</textPath></text>
<path d="M2270.600 1198.500l1.900 5.600h5.900l-4.800 3.500l1.800 5.600l-4.800-3.500l-4.800 3.500l1.800-5.600l-4.800-3.500h5.900z" fill="#333"/>
<text x="2270.6" y="1221.5" font-size="4.2" fill="#333" text-anchor="middle" textLength="36.0" lengthAdjust="spacingAndGlyphs">BRIAN W. REED</text>
<text x="2270.6" y="1229.0" font-size="3.8" fill="#333" text-anchor="middle">128833</text>
<text x="2270.6" y="1235.5" font-size="3.8" fill="#333" text-anchor="middle" transform="rotate(-12 2270.6 1235.5)">LICENSED</text>
<path d="M2186 1204c8-6 22-10 32-9c6 1 4 7-4 11c6-1 9 3 5 8c-3 4-12 8-16 8M2204 1196c1 14 .5 28-2 40M2218 1222c3-3 5-3 6 0M2226 1224c2-8 6-18 12-24c4-3 6 2 2 8c-3 5-8 9-12 11c5-1 10 2 14 7M2243 1224c8-5 18-12 28-22" fill="none" stroke="#2a6db5" stroke-width="1.300" stroke-linecap="round"/>
<text x="2200.0" y="1248.5" font-size="7.2" fill="#222" textLength="43.0" lengthAdjust="spacingAndGlyphs" font-style="italic">01/06/2025</text>
<text x="2247.0" y="1263.0" font-size="6.3" fill="#333" text-anchor="middle" textLength="63.0" lengthAdjust="spacingAndGlyphs">ISSUED: 01/06/2025</text>
<rect x="2200.2" y="1270.3" width="97.1" height="11.1" fill="#231f20"/><text x="2248.8" y="1278.5" font-size="7.3" fill="#fff" text-anchor="middle">REVISIONS</text>
<text x="2204.7" y="1291.3" font-size="4.2" fill="#333" textLength="28.0" lengthAdjust="spacingAndGlyphs">Revision No.</text>
<text x="2293.0" y="1291.3" font-size="4.2" fill="#333" text-anchor="end" textLength="31.0" lengthAdjust="spacingAndGlyphs">Revision Date</text>
<text x="2204.7" y="1410.0" font-size="6.3" fill="#333">Director</text>
<text x="2250.5" y="1410.0" font-size="6.3" fill="#333">Drawn By</text>
<text x="2204.7" y="1419.0" font-size="6.3" fill="#333">BWR</text>
<text x="2250.5" y="1419.0" font-size="6.3" fill="#333">BWR.JDK</text>
<text x="2204.7" y="1429.4" font-size="6.3" fill="#333">Designer</text>
<text x="2250.5" y="1429.4" font-size="6.3" fill="#333">Quality Control</text>
<text x="2204.7" y="1438.5" font-size="6.3" fill="#333">BWR</text>
<text x="2250.5" y="1438.5" font-size="6.3" fill="#333">BWR.JDK</text>
<text x="2204.7" y="1448.9" font-size="6.3" fill="#333">Project Engineer</text>
<text x="2204.7" y="1457.9" font-size="6.3" fill="#333">BWR</text>
<rect x="2200.2" y="1464.1" width="97.1" height="10.7" fill="#231f20"/><text x="2248.8" y="1471.9" font-size="6.8" fill="#fff" text-anchor="middle">PROJECT NO.</text>
<text x="2248.7" y="1489.0" font-size="15.3" fill="#222" text-anchor="middle" textLength="61.0" lengthAdjust="spacingAndGlyphs">23-155.00</text>
<rect x="2200.2" y="1508.8" width="97.1" height="11.1" fill="#231f20"/><text x="2248.8" y="1516.8" font-size="6.8" fill="#fff" text-anchor="middle">SHEET TITLE</text>
<text x="2248.7" y="1530.7" font-size="6.8" fill="#333" text-anchor="middle" textLength="79.0" lengthAdjust="spacingAndGlyphs">SITE DEMOLITION PLAN</text>
<text x="2248.7" y="1539.1" font-size="6.8" fill="#333" text-anchor="middle" textLength="50.0" lengthAdjust="spacingAndGlyphs">(SHEET 1 OF 2)</text>
<rect x="2200.2" y="1550.8" width="97.1" height="11.4" fill="#231f20"/><text x="2248.8" y="1558.9" font-size="6.8" fill="#fff" text-anchor="middle">SHEET NO.</text>
<text x="2232.4" y="1596.0" font-size="25.7" fill="#222" textLength="70.0" lengthAdjust="spacingAndGlyphs">C1.03</text>
<rect x="2200.200" y="1611.500" width="140.400" height="28" fill="#231f20"/>
<text x="2269.5" y="1627.5" font-size="4.8" fill="#fff" text-anchor="middle" textLength="100.0" lengthAdjust="spacingAndGlyphs">COPYRIGHT © 2024   VLK ARCHITECTS</text>
<path d="M2200 1464.400H2059.800V1640.200M2059.800 1587.200H2200" fill="none" stroke="#444" stroke-width="1"/>
<text x="2062.5" y="1473.0" font-size="5.6" fill="#333" textLength="74.0" lengthAdjust="spacingAndGlyphs">NOTES TO CONTRACTOR:</text>
<path d="M2062.500 1474.500H2137" stroke="#333" stroke-width=".6"/>
<text x="2063.0" y="1483.5" font-size="4.2" fill="#222">1.</text>
<text x="2071.9" y="1483.5" font-size="4.2" fill="#222" textLength="111.5" lengthAdjust="spacingAndGlyphs">ALL UNDERGROUND UTILITIES SHOWN ARE NOT</text>
<text x="2071.9" y="1488.7" font-size="4.2" fill="#222" textLength="120.1" lengthAdjust="spacingAndGlyphs">GUARANTEED TO BE COMPLETE OR DEFINITE, BUT</text>
<text x="2071.9" y="1493.6" font-size="4.2" fill="#222" textLength="111.5" lengthAdjust="spacingAndGlyphs">WERE OBTAINED FROM THE BEST INFORMATION</text>
<text x="2071.9" y="1498.8" font-size="4.2" fill="#222" textLength="28.6" lengthAdjust="spacingAndGlyphs">AVAILABLE.</text>
<text x="2063.0" y="1509.2" font-size="4.2" fill="#222">2.</text>
<text x="2071.9" y="1509.2" font-size="4.2" fill="#222" textLength="117.3" lengthAdjust="spacingAndGlyphs">THE LOCATION OF ALL UNDERGROUND UTILITIES</text>
<text x="2071.9" y="1514.4" font-size="4.2" fill="#222" textLength="114.4" lengthAdjust="spacingAndGlyphs">PRESENTED ON THESE DRAWINGS ARE SHOWN IN</text>
<text x="2071.9" y="1519.6" font-size="4.2" fill="#222" textLength="111.5" lengthAdjust="spacingAndGlyphs">AN APPROXIMATE WAY ONLY. THE CONTRACTOR</text>
<text x="2071.9" y="1524.8" font-size="4.2" fill="#222" textLength="117.3" lengthAdjust="spacingAndGlyphs">SHALL DETERMINE THE EXACT LOCATION BEFORE</text>
<text x="2071.9" y="1530.0" font-size="4.2" fill="#222" textLength="114.4" lengthAdjust="spacingAndGlyphs">COMMENCING ANY WORK. CONTRACTOR IS FULLY</text>
<text x="2071.9" y="1535.2" font-size="4.2" fill="#222" textLength="100.1" lengthAdjust="spacingAndGlyphs">RESPONSIBLE FOR ANY AND ALL DAMAGES</text>
<text x="2071.9" y="1540.4" font-size="4.2" fill="#222" textLength="111.5" lengthAdjust="spacingAndGlyphs">CAUSED BY HIS FAILURE TO EXACTLY LOCATE</text>
<text x="2071.9" y="1545.6" font-size="4.2" fill="#222" textLength="117.3" lengthAdjust="spacingAndGlyphs">AND PRESERVE THESE UNDERGROUND UTILITIES.</text>
<text x="2063.0" y="1556.0" font-size="4.2" fill="#222">3.</text>
<text x="2071.9" y="1556.0" font-size="4.2" fill="#222" textLength="111.5" lengthAdjust="spacingAndGlyphs">CONTRACTOR SHALL VERIFY ALL UNDERGROUND</text>
<text x="2071.9" y="1561.2" font-size="4.2" fill="#222" textLength="120.1" lengthAdjust="spacingAndGlyphs">UTILITIES (PRIVATE OR PUBLIC) IN THE FIELD</text>
<text x="2071.9" y="1566.4" font-size="4.2" fill="#222" textLength="111.5" lengthAdjust="spacingAndGlyphs">PRIOR TO CONSTRUCTION. IF A CONFLICT IS</text>
<text x="2071.9" y="1571.6" font-size="4.2" fill="#222" textLength="111.5" lengthAdjust="spacingAndGlyphs">DISCOVERED, CONTRACTOR SHALL NOTIFY THE</text>
<text x="2071.9" y="1576.8" font-size="4.2" fill="#222" textLength="60.1" lengthAdjust="spacingAndGlyphs">ENGINEER IMMEDIATELY.</text>
<text x="2065.0" y="1598.0" font-size="8.2" fill="#222" textLength="67.6" lengthAdjust="spacingAndGlyphs">UTILITY ONE CALL</text>
<text x="2065.0" y="1605.9" font-size="4" fill="#666" textLength="50.4" lengthAdjust="spacingAndGlyphs">CONTRACTOR TO CALL</text>
<text x="2065.0" y="1611.4" font-size="4" fill="#666" textLength="53.2" lengthAdjust="spacingAndGlyphs">BEFORE DIGGING !!!!</text>
<text x="2065.0" y="1616.7" font-size="4" fill="#666" textLength="28.0" lengthAdjust="spacingAndGlyphs">PHONE: 811</text>
<text x="2065.0" y="1622.6" font-size="4" fill="#666" textLength="61.6" lengthAdjust="spacingAndGlyphs">HOUSTON (713) 223-4567</text>
<text x="2065.0" y="1627.8" font-size="4" fill="#666" textLength="75.6" lengthAdjust="spacingAndGlyphs">(STATEWIDE OUTSIDE HOUSTON)</text>
<text x="2065.0" y="1633.3" font-size="4" fill="#666" textLength="44.8" lengthAdjust="spacingAndGlyphs">1-(800)-344-8377</text>
<circle cx="2172.800" cy="1614.200" r="21.500" fill="#fff" stroke="#a8a8a8" stroke-width="4.500"/>
<path d="M2160 1612l8-6l10 2l-2 8l-10 4zM2170 1598l3 1l-4 14M2176 1604l10 4l-3 6M2170 1616l6 6l-3 8l-7-3z" fill="#333" stroke="#333" stroke-width="1"/>
<path d="M2157.500 1599L2188 1629.500" stroke="#a8a8a8" stroke-width="4.500"/>
<g opacity="1"><circle cx="1375.8" cy="810.7" r="6.8" fill="#fff" stroke="#222" stroke-width=".9"/><text x="1375.8" y="813.2" font-size="7.2" fill="#222" text-anchor="middle">4</text></g><g opacity="1"><circle cx="1469.0" cy="807.5" r="6.8" fill="#fff" stroke="#222" stroke-width=".9"/><text x="1469.0" y="810.0" font-size="7.2" fill="#222" text-anchor="middle">4</text></g><g opacity="1"><circle cx="1599.4" cy="808.4" r="6.8" fill="#fff" stroke="#222" stroke-width=".9"/><text x="1599.4" y="810.9" font-size="7.2" fill="#222" text-anchor="middle">4</text></g><g opacity="1"><circle cx="1161.3" cy="832.0" r="6.8" fill="#fff" stroke="#222" stroke-width=".9"/><text x="1161.3" y="834.5" font-size="7.2" fill="#222" text-anchor="middle">4</text></g><g opacity="1"><circle cx="1273.0" cy="840.4" r="6.8" fill="#fff" stroke="#222" stroke-width=".9"/><text x="1273.0" y="842.9" font-size="7.2" fill="#222" text-anchor="middle">4</text></g><g opacity="1"><circle cx="1687.6" cy="814.6" r="6.8" fill="#fff" stroke="#222" stroke-width=".9"/><text x="1687.6" y="817.1" font-size="7.2" fill="#222" text-anchor="middle">6</text></g><g opacity="1"><circle cx="1379.5" cy="864.0" r="6.8" fill="#fff" stroke="#222" stroke-width=".9"/><text x="1379.5" y="866.5" font-size="7.2" fill="#222" text-anchor="middle">5</text></g><g opacity="1"><circle cx="1480.1" cy="914.5" r="6.8" fill="#fff" stroke="#222" stroke-width=".9"/><text x="1480.1" y="917.0" font-size="7.2" fill="#222" text-anchor="middle">5</text></g><g opacity="1"><circle cx="1660.0" cy="890.6" r="6.8" fill="#fff" stroke="#222" stroke-width=".9"/><text x="1660.0" y="893.1" font-size="7.2" fill="#222" text-anchor="middle">5</text></g><g opacity="1"><circle cx="1689.0" cy="959.8" r="6.8" fill="#fff" stroke="#222" stroke-width=".9"/><text x="1689.0" y="962.3" font-size="7.2" fill="#222" text-anchor="middle">6</text></g><g opacity="1"><circle cx="1379.5" cy="1021.3" r="6.8" fill="#fff" stroke="#222" stroke-width=".9"/><text x="1379.5" y="1023.8" font-size="7.2" fill="#222" text-anchor="middle">5</text></g><g opacity="1"><circle cx="1660.0" cy="1048.7" r="6.8" fill="#fff" stroke="#222" stroke-width=".9"/><text x="1660.0" y="1051.2" font-size="7.2" fill="#222" text-anchor="middle">5</text></g><g opacity="1"><circle cx="1363.9" cy="1074.4" r="6.8" fill="#fff" stroke="#222" stroke-width=".9"/><text x="1363.9" y="1076.9" font-size="7.2" fill="#222" text-anchor="middle">9</text></g><g opacity="1"><circle cx="1471.7" cy="1070.0" r="6.8" fill="#fff" stroke="#222" stroke-width=".9"/><text x="1471.7" y="1072.5" font-size="7.2" fill="#222" text-anchor="middle">5</text></g><g opacity="1"><circle cx="1379.3" cy="1100.8" r="6.8" fill="#fff" stroke="#222" stroke-width=".9"/><text x="1379.3" y="1103.3" font-size="7.2" fill="#222" text-anchor="middle">5</text></g><g opacity="1"><circle cx="1589.1" cy="1135.4" r="6.8" fill="#fff" stroke="#222" stroke-width=".9"/><text x="1589.1" y="1137.9" font-size="7.2" fill="#222" text-anchor="middle">1</text></g><g opacity="1"><circle cx="1669.6" cy="1167.9" r="6.8" fill="#fff" stroke="#222" stroke-width=".9"/><text x="1669.6" y="1170.4" font-size="7.2" fill="#222" text-anchor="middle">6</text></g><g opacity="1"><circle cx="1381.0" cy="1183.7" r="6.8" fill="#fff" stroke="#222" stroke-width=".9"/><text x="1381.0" y="1186.2" font-size="7.2" fill="#222" text-anchor="middle">2</text></g><g opacity="1"><circle cx="1820.0" cy="1030.4" r="6.8" fill="#fff" stroke="#222" stroke-width=".9"/><text x="1820.0" y="1032.9" font-size="7.2" fill="#222" text-anchor="middle">4</text></g><g opacity="1"><circle cx="1051.0" cy="1328.7" r="6.8" fill="#fff" stroke="#222" stroke-width=".9"/><text x="1051.0" y="1331.2" font-size="7.2" fill="#222" text-anchor="middle">6</text></g><g opacity="1"><circle cx="868.0" cy="1403.9" r="6.8" fill="#fff" stroke="#222" stroke-width=".9"/><text x="868.0" y="1406.4" font-size="7.2" fill="#222" text-anchor="middle">6</text></g><g opacity="1"><circle cx="1342.3" cy="1269.0" r="6.8" fill="#fff" stroke="#222" stroke-width=".9"/><text x="1342.3" y="1271.5" font-size="7.2" fill="#222" text-anchor="middle">6</text></g><g opacity="1"><circle cx="1478.0" cy="1254.0" r="6.8" fill="#fff" stroke="#222" stroke-width=".9"/><text x="1478.0" y="1256.5" font-size="7.2" fill="#222" text-anchor="middle">1</text></g><g opacity="1"><circle cx="1560.8" cy="1244.5" r="6.8" fill="#fff" stroke="#222" stroke-width=".9"/><text x="1560.8" y="1247.0" font-size="7.2" fill="#222" text-anchor="middle">1</text></g><g opacity="1"><circle cx="1587.0" cy="1255.2" r="6.8" fill="#fff" stroke="#222" stroke-width=".9"/><text x="1587.0" y="1257.7" font-size="7.2" fill="#222" text-anchor="middle">1</text></g><g opacity="1"><circle cx="1588.7" cy="1273.5" r="6.8" fill="#fff" stroke="#222" stroke-width=".9"/><text x="1588.7" y="1276.0" font-size="7.2" fill="#222" text-anchor="middle">4</text></g><g opacity="1"><circle cx="1689.8" cy="1223.3" r="6.8" fill="#fff" stroke="#222" stroke-width=".9"/><text x="1689.8" y="1225.8" font-size="7.2" fill="#222" text-anchor="middle">6</text></g><g opacity="1"><circle cx="1681.3" cy="1358.6" r="6.8" fill="#fff" stroke="#222" stroke-width=".9"/><text x="1681.3" y="1361.1" font-size="7.2" fill="#222" text-anchor="middle">6</text></g><g opacity="1"><circle cx="1689.8" cy="1396.0" r="6.8" fill="#fff" stroke="#222" stroke-width=".9"/><text x="1689.8" y="1398.5" font-size="7.2" fill="#222" text-anchor="middle">6</text></g><g opacity="1"><circle cx="1738.1" cy="1371.6" r="6.8" fill="#fff" stroke="#222" stroke-width=".9"/><text x="1738.1" y="1374.1" font-size="7.2" fill="#222" text-anchor="middle">4</text></g>
<path d="M1055 1383L1957 1179.500L1882.500 1382.700Z" fill="rgba(79,83,151,.31)" stroke="#3c4096" stroke-width="2.200" stroke-linejoin="round"/>
<path d="M1693.400 996.600L1759.300 1165.800L1580.900 1232.700L1519 1064.900Z" fill="rgba(79,83,151,.31)" stroke="#3c4096" stroke-width="2.200" stroke-linejoin="round"/>
<path d="M1539.500 1100.900L1647.400 1122.800L1621.800 1241.700L1514.400 1218.700Z" fill="rgba(79,83,151,.31)" stroke="#3c4096" stroke-width="2.200" stroke-linejoin="round"/>
<path d="M1369.700 863.900L1973 1144.600L1053 1381.800ZM1350 1055L1434.800 1035L1433 1125.800Z" fill="rgba(255,0,0,.6)" fill-rule="evenodd"/>
<path d="M1369.700 863.900L1973 1144.600L1053 1381.800ZM1350 1055L1547 1008.700L1435.800 986.400L1433 1125.800Z" fill="none" stroke="rgba(255,25,25,.85)" stroke-width="4.700" stroke-linejoin="round"/>
<rect x="1401.500" y="835.800" width="284.200" height="314.600" fill="rgba(26,214,63,.32)" stroke="#b57be8" stroke-width="2.100"/>
<rect x="1734.2" y="856.7" width="252.8" height="113.0" fill="rgba(93,203,53,.32)" stroke="#5dcb35" stroke-width="3.200"/>
<rect x="1737.4" y="859.9000000000001" width="246.4" height="106.6" fill="none" stroke="#243" stroke-width="1.300" stroke-dasharray="1 2.200" opacity=".45"/>
<rect x="1532.8" y="1162.8" width="81.0" height="55.5" fill="rgba(93,203,53,.32)" stroke="#5dcb35" stroke-width="3.200"/>
<rect x="1536.0" y="1166.0" width="74.6" height="49.1" fill="none" stroke="#243" stroke-width="1.300" stroke-dasharray="1 2.200" opacity=".45"/>
<rect x="1646.9" y="1217.1" width="57.7" height="131.7" fill="rgba(93,203,53,.32)" stroke="#5dcb35" stroke-width="3.200"/>
<rect x="1650.1000000000001" y="1220.3" width="51.3" height="125.3" fill="none" stroke="#243" stroke-width="1.300" stroke-dasharray="1 2.200" opacity=".45"/>
<path d="M909.200 1147.800V865C909.200 843 926 830 948 827.500L1034 819.400C1051 818.200 1060.400 827 1060.400 842V1274C1034 1262 1001 1237 967.400 1198C950.700 1166 950 1147.800 938 1147.800Z" fill="rgba(21,82,224,.30)" stroke="#1552e0" stroke-width="2.800" stroke-linejoin="round"/>
<path d="M1398.800 1276.500L1565.400 1281C1585 1282 1596 1290 1601.900 1297.500C1613 1306 1625.900 1316 1625.900 1328L1629.300 1386.500C1629 1398 1626 1404 1617.900 1409.300C1611 1415 1606 1418 1599.600 1418.400L1536.900 1421.100C1542 1417 1544.800 1414 1544.800 1411.600C1546.500 1407 1547.100 1402 1547.100 1397.900V1308.900C1547 1299 1543 1293.600 1535.700 1293.400L1382.800 1291.800Z" fill="rgba(21,82,224,.30)" stroke="#1552e0" stroke-width="2.800" stroke-linejoin="round"/>
<g opacity="0.75"><circle cx="964.0" cy="854.4" r="6.8" fill="#fff" stroke="#222" stroke-width=".9"/><text x="964.0" y="856.9" font-size="7.2" fill="#222" text-anchor="middle">6</text></g>
<g opacity="0.75"><circle cx="1615.6" cy="1347.2" r="6.8" fill="#fff" stroke="#222" stroke-width=".9"/><text x="1615.6" y="1349.7" font-size="7.2" fill="#222" text-anchor="middle">8</text></g>
<g opacity="0.75"><circle cx="1596.6" cy="1401.8" r="6.8" fill="#fff" stroke="#222" stroke-width=".9"/><text x="1596.6" y="1404.3" font-size="7.2" fill="#222" text-anchor="middle">6</text></g>
<path d="M992.500 805V844M1081 1306.500V1326M1370 1248V1269" fill="none" stroke="#b57be8" stroke-width="3"/>
<path d="M1716.700 777V1419.600M1695.500 1141L1716.500 1178M1605.300 1383H1642.300M1706.900 1338L1717.600 1350" fill="none" stroke="#b57be8" stroke-width="3.200" stroke-linecap="round"/>
<rect x="1279" y="809.700" width="27" height="10.800" fill="#8feee6" stroke="#1fc4b0" stroke-width="1.600"/>
<circle cx="1404" cy="804.6" r="5.9" fill="#4a2ab0"/>
<circle cx="1405" cy="822.8" r="5.8" fill="#4a2ab0"/>
<circle cx="1441" cy="821.8" r="5.5" fill="#7df0ff"/>
<circle cx="1502.5" cy="822.8" r="5.5" fill="#7df0ff"/>
<circle cx="1580.6" cy="821.8" r="5.5" fill="#7df0ff"/>
<circle cx="1640" cy="821" r="5.5" fill="#7df0ff"/>
<circle cx="1858" cy="1047.8" r="5.5" fill="#5cd0f5"/>
<circle cx="1409" cy="1166.9" r="5.5" fill="#2fe8d0"/>
<circle cx="1387.8" cy="1054.6" r="5.5" fill="#6a0f7a"/>
<circle cx="1188" cy="808" r="5.8" fill="#c07530"/>
<circle cx="894.7" cy="1386" r="5.8" fill="#b01010"/>
<circle cx="1397.4" cy="874" r="5.8" fill="#2348c8"/>
<circle cx="1397.4" cy="955" r="5.8" fill="#2348c8"/>
<circle cx="1397.4" cy="1032" r="5.8" fill="#2348c8"/>
<circle cx="1397.4" cy="1111.4" r="5.8" fill="#2348c8"/>
<circle cx="1689" cy="874.8" r="5.8" fill="#1f45c2"/>
<circle cx="1689" cy="1032" r="5.8" fill="#1f45c2"/>
<circle cx="1689" cy="1110.6" r="5.8" fill="#1f45c2"/>
<circle cx="1617.2" cy="1163.5" r="5.8" fill="#3a62dd"/>
<circle cx="1507.9" cy="1235.2" r="5.8" fill="#3a62dd"/>
<circle cx="1584.8" cy="1233.6" r="5.8" fill="#3a62dd"/>
<circle cx="1620.8" cy="1251.1" r="5.8" fill="#3a62dd"/>
<circle cx="1640.7" cy="1373.9" r="5.8" fill="#f0f020"/>
<circle cx="1773.5" cy="1387.6" r="5.8" fill="#5aab1c"/>
<circle cx="1379.600" cy="871" r="50" fill="rgba(215,70,140,.27)" stroke="#cf3f90" stroke-width="4.200"/>
<circle cx="1372.400" cy="863.900" r="13" fill="none" stroke="#9fb0cf" stroke-width="2"/>
</svg>
<div style="position:absolute;left:2864px;top:1484px;width:120px;height:120px;border-radius:60px 16px 60px 60px;background:#1c2b40;box-shadow:0 6px 14px rgba(0,0,0,.28)"></div>
<svg style="left:2864px;top:1484px" width="120" height="120"><path d="M46 44h30a9 9 0 0 1 9 9v16a9 9 0 0 1-9 9h-35a3 3 0 0 1-3-3v-23a8 8 0 0 1 8-8z" fill="#fff"/><path d="M48.500 55.500h26M48.500 65.500h15" stroke="#1c2b40" stroke-width="3.600" stroke-linecap="round"/></svg>
<!-- part_toolbar -->
<div class="card" style="left:15px;top:141px;width:768px;height:96px;border-radius:10px"></div>
<span class="t" style="left:32.0px;top:176.8px;font-size:23.5px;color:#5a5a5a;letter-spacing:0.76px;-webkit-text-stroke:0.4px #5a5a5a;">Measurements</span>
<span class="t" style="left:203.0px;top:176.1px;font-size:25px;color:#222;">/</span>
<span class="t" style="left:218.3px;top:177.8px;font-size:22.5px;color:#3f5bd9;letter-spacing:-0.18px;-webkit-text-stroke:0.3px #3f5bd9;">Sample Property- Earthwork</span>
<span class="t" style="left:629.5px;top:178.8px;font-size:20px;color:#e2463c;letter-spacing:-0.28px;-webkit-text-stroke:0.9px #e2463c;">Disable editing</span>
<div class="card" style="left:1113px;top:135px;width:263px;height:108px;border-radius:11px"></div>
<div class="card" style="left:1391px;top:135px;width:401px;height:108px;border-radius:11px"></div>
<div class="card" style="left:1807px;top:135px;width:329px;height:108px;border-radius:11px"></div>
<div class="card" style="left:2151px;top:135px;width:373px;height:108px;border-radius:11px"></div>
<div class="card" style="left:2539px;top:135px;width:165px;height:108px;border-radius:11px"></div>
<div class="card" style="left:2719px;top:135px;width:84px;height:108px;border-radius:11px"></div>
<div class="card" style="left:2818px;top:135px;width:191px;height:108px;border-radius:11px"></div>
<div class="card" style="left:2472px;top:258.5px;width:432px;height:62.5px;border-radius:10px"></div>
<span class="t" style="left:2486.0px;top:278.6px;font-size:29.5px;color:#222;letter-spacing:-1.33px;-webkit-text-stroke:0.5px #222;">C1.03 / SITE DEMOLITION PL...</span>
<div class="card" style="left:2937px;top:258.5px;width:72px;height:71.5px;border-radius:10px"></div>
<div style="position:absolute;left:1119px;top:141px;width:81px;height:43px;border-radius:9px;background:#e7eafc"></div>
<div style="position:absolute;left:2236px;top:190px;width:73px;height:43px;border-radius:9px;background:#e7eafc"></div>
<svg style="left:0;top:0" width="3024" height="340" viewBox="0 0 3024 340" fill="none" stroke-linecap="butt" stroke-linejoin="miter">
<g stroke="#3f5bd9" stroke-width="2.2" stroke-linecap="round" stroke-linejoin="round"><path d="M543.500 200.500h15.500a6.500 6.500 0 0 0 1-12.900a9.500 9.500 0 0 0-18.500-2.200a7.600 7.600 0 0 0 2 15.100z"/><path d="M546.500 190.500l3.800 3.800l6.700-7"/></g>
<g stroke="#e2463c" stroke-width="2.200" stroke-linecap="round" stroke-linejoin="round"><path d="M598 193.500l1-4.500l10.500-10.500a2.300 2.300 0 0 1 3.300 3.300l-10.500 10.500z"/><path d="M595.500 199h19"/></g>
<rect x="1147.5" y="150.7" width="6.200" height="6.200" fill="#3f5fe3"/>
<rect x="1167" y="150.7" width="6.200" height="6.200" fill="#3f5fe3"/>
<rect x="1147.5" y="169.8" width="6.200" height="6.200" fill="#3f5fe3"/>
<rect x="1167" y="169.8" width="6.200" height="6.200" fill="#3f5fe3"/>
<path d="M1155.500 153.800h9.500M1155.500 172.900h9.500M1150.600 158.700v9.300M1170.100 158.700v9.300" stroke="#3f5fe3" stroke-width="2.200"/>
<path d="M1234.300 149.400v26h25.200M1234.300 164.300h11.800v11" stroke="#b2b2b2" stroke-width="3"/>
<rect x="1330.500" y="161.300" width="12.600" height="12.600" stroke="#666" stroke-width="3"/>
<path d="M1332.200 152.300c-6.500 0-11 3.500-11 10.500M1315.600 158.500l5.600 5.800l5.600-5.800" stroke="#666" stroke-width="2.800"/>
<rect x="1150.500" y="202.600" width="12" height="11.600" stroke="#666" stroke-width="2.800"/><rect x="1156" y="208.600" width="15" height="14.400" rx="1.500" fill="#666"/>
<path d="M1230.300 227.700c2-16 14-28 31.400-31.200" stroke="#888" stroke-width="1"/>
<rect x="1228.1" y="225.5" width="4.400" height="4.400" rx="1" fill="#fff" stroke="#888" stroke-width="1"/>
<rect x="1238.0" y="204.5" width="4.400" height="4.400" rx="1" fill="#fff" stroke="#888" stroke-width="1"/>
<rect x="1259.5" y="194.3" width="4.400" height="4.400" rx="1" fill="#fff" stroke="#888" stroke-width="1"/>
<rect x="1319" y="210.100" width="12.800" height="12.800" stroke="#666" stroke-width="3"/>
<path d="M1330.200 201.700c7 0 11.400 3.500 11.400 10.500M1336 207.800l5.600 5.800l5.600-5.800" stroke="#666" stroke-width="2.800"/>
<path d="M1424.300 183.500v-5h19.700v5M1423 188.900h22.200M1424.300 194.400v5h19.700v-5" stroke="#666" stroke-width="2.600"/>
<path d="M1508.300 190v-8.200a1.500 1.500 0 0 1 3 0v7.200v-9.600a1.500 1.500 0 0 1 3 0v9.200v-8.400a1.500 1.500 0 0 1 3 0v9v-6a1.500 1.500 0 0 1 3 0v9.800c0 4.500-2.600 7.200-7 7.200c-3.600 0-5.600-1.600-7-4.600l-2.300-5.200c-.5-1.300.6-2.300 1.800-1.700l2.500 2.600" stroke="#666" stroke-width="1.400" stroke-linejoin="round" stroke-linecap="round"/>
<path d="M1579.500 175.700h12v15.400h15v11.100h-27z" stroke="#666" stroke-width="3"/>
<path d="M1580 180.500h6M1580 186h6M1580 191.500h6M1585.500 202v-5.500M1591 202v-4M1596.500 202v-5.500M1602 202v-4" stroke="#666" stroke-width="2.400"/>
<g transform="translate(1673.600 187.800) rotate(-38)"><rect x="-8" y="-5.200" width="19.500" height="10.400" rx="1" stroke="#666" stroke-width="2.600"/><path d="M-1.500 0h8.500" stroke="#666" stroke-width="2.200"/><path d="M-8 -5.200l-4.200 2v6.400l4.200 2" stroke="#666" stroke-width="2.200" stroke-linejoin="round"/><path d="M-14.500 -2.500l-3.600 4.800h3.600z" fill="#666"/></g>
<path d="M1739.700 200.800l1.700-6.200a11.600 11.600 0 1 1 4.600 4.700z" stroke="#666" stroke-width="2.600" stroke-linejoin="round"/>
<rect x="1835.0" y="148.200" width="3.200" height="3.200" fill="#666"/>
<rect x="1841.8" y="148.200" width="3.200" height="3.200" fill="#666"/>
<rect x="1848.6" y="148.200" width="3.200" height="3.200" fill="#666"/>
<rect x="1855.4" y="148.200" width="3.200" height="3.200" fill="#666"/>
<rect x="1835" y="154.9" width="3.200" height="3.200" fill="#666"/>
<rect x="1835" y="161.6" width="3.200" height="3.200" fill="#666"/>
<rect x="1835" y="168.3" width="3.200" height="3.200" fill="#666"/>
<rect x="1855.400" y="154.900" width="3.200" height="3.200" fill="#666"/><rect x="1841.800" y="168.300" width="3.200" height="3.200" fill="#666"/>
<path d="M1849 161l12.500 5.200l-5 2.300l5.800 6l-2.600 2.300l-5.600-6.200l-2.600 4.400z" stroke="#666" stroke-width="2" stroke-linejoin="miter" fill="#fff"/>
<path d="M1917.500 157h24M1924.800 156.500v-4.400h10.400v4.400M1920.600 157.500v16.200h17.800v-16.200M1927 162.300v6.800M1932.200 162.300v6.800" stroke="#666" stroke-width="2.600"/>
<path d="M1999.500 163h21M2010 152.500v21" stroke="#666" stroke-width="2.400"/><path d="M2010 150l4.300 5h-8.600zM2010 176l4.300-5h-8.600zM1997 163l5-4.300v8.600zM2023 163l-5-4.300v8.600z" fill="#666"/>
<path d="M2100 160.500h-12.500a5.600 5.600 0 0 0 0 11.200h10M2094 154l6.500 6.500l-6.500 6.500" stroke="#666" stroke-width="2.300"/>
<rect x="1835.0" y="197.300" width="3.200" height="3.200" fill="#666"/>
<rect x="1841.6" y="197.300" width="3.200" height="3.200" fill="#666"/>
<rect x="1848.2" y="197.300" width="3.200" height="3.200" fill="#666"/>
<rect x="1854.8" y="197.300" width="3.200" height="3.200" fill="#666"/>
<rect x="1835" y="203.5" width="3.200" height="3.200" fill="#666"/>
<rect x="1835" y="209.7" width="3.200" height="3.200" fill="#666"/>
<rect x="1835" y="215.9" width="3.200" height="3.200" fill="#666"/>
<rect x="1844.200" y="206" width="20.800" height="20.800" rx="1.500" fill="#666"/><rect x="1853.600" y="203" width="2.600" height="4" fill="#666"/><rect x="1841" y="214.800" width="4" height="2.600" fill="#666"/>
<path d="M1856.500 213.500l8.500 4.200v9h-3.500l-2-3l-2 3.200z" fill="#fff"/><path d="M1860 219.500l3.500 5" stroke="#666" stroke-width="1.600"/>
<path d="M1921.500 209h12.500a5.600 5.600 0 0 1 0 11.200h-10M1927.500 202.500l-6.500 6.500l6.500 6.500" stroke="#666" stroke-width="2.300"/>
<path d="M2002.500 219v-17.500a3 3 0 0 1 3-3h8.500a3 3 0 0 1 3 3v7M1996.600 204.500v14.500a4 4 0 0 0 4 4h5" stroke="#666" stroke-width="2.300"/>
<circle cx="2015.400" cy="217.200" r="8.600" fill="#666"/><path d="M2010.500 217.200h9M2016.500 213.500l3.700 3.700l-3.700 3.700" stroke="#fff" stroke-width="1.800"/>
<path d="M2087 202.800a10.400 10.400 0 1 0 4 .8" stroke="#666" stroke-width="2.400" stroke-dasharray="36 3.500 4 3.500 4 3.500 4 3.500 4 3.500"/>
<path d="M2085.500 198.500l5.500 4.500l-5 5" stroke="#666" stroke-width="2.400"/>
<path d="M2108.200 208.500h15.800l-7.900 8z" fill="#666"/>
<path d="M2194 152.800l10.800 7.400l-2.400 12.200a3 3 0 0 1-2.800 2.400h-11.200a3 3 0 0 1-2.800-2.400l-2.400-12.200z" stroke="#666" stroke-width="2" stroke-linejoin="round"/><path d="M2190 165.300h8M2194 161.300v8" stroke="#666" stroke-width="1.800"/>
<circle cx="2272" cy="162.800" r="11.400" stroke="#666" stroke-width="2"/><path d="M2267 162.800h10M2272 157.800v10" stroke="#666" stroke-width="2"/>
<rect x="2339" y="151.500" width="24" height="23.200" rx="6.500" stroke="#666" stroke-width="2"/><path d="M2346.500 163h9.500M2351.200 158.200v9.600" stroke="#666" stroke-width="2"/>
<path d="M2420.300 166l5.200-10M2427.800 156l12.600 13" stroke="#666" stroke-width="2.400"/><path d="M2429.500 154.300h9M2441.500 157.500v10" stroke="#666" stroke-width="1.600" stroke-dasharray="3 2"/>
<circle cx="2419.5" cy="167.6" r="2.900" stroke="#666" stroke-width="1.800" fill="#fff"/>
<circle cx="2426.3" cy="154.3" r="2.900" stroke="#666" stroke-width="1.800" fill="#fff"/>
<circle cx="2441.3" cy="154.3" r="2.900" stroke="#666" stroke-width="1.800" fill="#fff"/>
<circle cx="2442" cy="170.6" r="2.900" stroke="#666" stroke-width="1.800" fill="#fff"/>
<circle cx="2496" cy="180.2" r="2.700" fill="#555"/>
<circle cx="2496" cy="188" r="2.700" fill="#555"/>
<circle cx="2496" cy="195.8" r="2.700" fill="#555"/>
<path d="M2179.300 199.200l12-1.300l5 6.500l-4.800 8.300l-12 1.400z" stroke="#666" stroke-width="2" stroke-linejoin="round"/><path d="M2180.500 200l14 13.500" stroke="#666" stroke-width="1.200" stroke-dasharray="2.500 1.800"/>
<path d="M2189 215.500l15 3.200M2196.500 208.500l4.500 14" stroke="#666" stroke-width="1.200"/><ellipse cx="2205.800" cy="219" rx="2.400" ry="1.700" stroke="#666" stroke-width="1.100"/><ellipse cx="2200" cy="224.300" rx="1.700" ry="2.400" stroke="#666" stroke-width="1.100"/>
<rect x="2262" y="199.800" width="13.800" height="11.400" stroke="#3f5fe3" stroke-width="1.800" stroke-dasharray="3 1.600"/>
<path d="M2274.800 211.300l8.300 7.600l-4.400.6l2.600 4.600l-2.300 1.200l-2.500-4.700l-2.500 2.800z" fill="#3f5fe3"/>
<path d="M2343.700 204.200v15M2343.700 211.300h7.600a7 7 0 0 1 7 7v1" stroke="#666" stroke-width="2.600"/>
<circle cx="2343.7" cy="204.2" r="3.400" fill="#666"/>
<circle cx="2343.7" cy="219.2" r="3.400" fill="#666"/>
<circle cx="2358.3" cy="219.2" r="3.400" fill="#666"/>
<rect x="2422.300" y="203.100" width="17.400" height="17.600" stroke="#666" stroke-width="4.600"/>
<path d="M2568.500 187.700l12.500-12l11.800 1.200l1.500 13.600l-12.200 11z" stroke="#666" stroke-width="2.500" stroke-linejoin="miter"/><circle cx="2586.200" cy="184.100" r="2.400" fill="#666"/>
<path d="M2661 174.500l14.200 9.200l-14.200 9.200l-14.200-9.200z" fill="#666"/><path d="M2647.600 189.600l13.400 8.600l13.400-8.600M2647.600 194.600l13.400 8.600l13.400-8.600" stroke="#666" stroke-width="2"/>
<circle cx="2752" cy="184.100" r="11.500" stroke="#666" stroke-width="2.400"/><path d="M2747.300 193.500l4.700-15l4.700 15M2748.800 189h6.400" stroke="#666" stroke-width="2.200" stroke-linejoin="round"/><path d="M2752 173.500v6" stroke="#666" stroke-width="1.400"/>
<path d="M2773.200 186h11.800l-5.900 5.800z" fill="#666"/>
<rect x="2859.500" y="179.500" width="22.300" height="19" stroke="#666" stroke-width="2.500"/>
<rect x="2863.3" y="183.4" width="2.200" height="2.200" fill="#666"/>
<rect x="2863.3" y="187.4" width="2.200" height="2.200" fill="#666"/>
<rect x="2867.5" y="183.4" width="2.200" height="2.200" fill="#666"/>
<rect x="2867.5" y="187.4" width="2.200" height="2.200" fill="#666"/>
<rect x="2871.7" y="183.4" width="2.200" height="2.200" fill="#666"/>
<rect x="2871.7" y="187.4" width="2.200" height="2.200" fill="#666"/>
<rect x="2875.9" y="183.4" width="2.200" height="2.200" fill="#666"/>
<rect x="2875.9" y="187.4" width="2.200" height="2.200" fill="#666"/>
<path d="M2863.300 194.300h14.500" stroke="#666" stroke-width="2.200"/>
<path d="M2939 183.800a12.700 12.700 0 1 1 .2 9.800" stroke="#777" stroke-width="2.500"/><path d="M2937.300 178.200v6.800h6.800" stroke="#777" stroke-width="2.500"/><path d="M2950.800 181v8l4.600 4.200" stroke="#777" stroke-width="2.500"/>
<rect x="2962" y="282" width="22" height="24.500" stroke="#444" stroke-width="2.500"/><path d="M2967.500 290.500h11.500M2967.500 297h11.500" stroke="#444" stroke-width="2.200"/>
</svg>
<!-- part_panel -->
<div class="card" style="left:15px;top:258px;width:672px;height:1389px;border-radius:18px 18px 20px 20px;box-shadow:0 4px 40px rgba(0,0,0,.14)"></div>
<span class="t" style="left:88.1px;top:287.9px;font-size:24px;color:#1a1a1a;letter-spacing:0.29px;-webkit-text-stroke:0.7px #1a1a1a;">Features</span>
<div style="position:absolute;left:42.500px;top:336.500px;width:616px;height:74px;border:2px solid #d3d7df;border-radius:17px;box-sizing:border-box"></div>
<div style="position:absolute;left:359px;top:349px;width:291px;height:51px;border-radius:8px;background:#e7eafc"></div>
<span class="t" style="left:69.9px;top:361.6px;font-size:24px;color:#5c5c5c;font-weight:700;letter-spacing:-0.87px;">TAKEOFF AGGREGATE</span>
<span class="t" style="left:418.1px;top:361.6px;font-size:24px;color:#3f5bd9;font-weight:700;letter-spacing:-0.74px;">PAGE SPECIFIC</span>
<div style="position:absolute;left:42.500px;top:431px;width:167px;height:59px;border:2px solid #b9b9b9;border-radius:7px;box-sizing:border-box;background:#fff"></div>
<span class="t" style="left:63.0px;top:450.7px;font-size:22px;color:#222;letter-spacing:-0.13px;-webkit-text-stroke:0.3px #222;">Paving</span>
<div style="position:absolute;left:234px;top:430.500px;width:55.500px;height:55px;border:2px solid #93a2f0;border-radius:8px;box-sizing:border-box;background:#f4f6ff"></div>
<div style="position:absolute;left:42.500px;top:528px;width:617px;height:78px;border-radius:12px 12px 0 0;background:#ebebeb"></div>
<div style="position:absolute;left:42.500px;top:606px;width:617px;height:899px;box-sizing:border-box;border-left:1.500px solid #e4e4e4;border-right:1.500px solid #e4e4e4;background:#fff"></div>
<div style="position:absolute;left:44px;top:769.500px;width:614px;height:84px;background:#fafafa"></div>
<div style="position:absolute;left:44px;top:1009.500px;width:614px;height:84px;background:#fafafa"></div>
<div style="position:absolute;left:44px;top:1166px;width:614px;height:83.500px;background:#e7eafc"></div>
<div style="position:absolute;left:42.500px;top:1485px;width:617px;height:20px;background:linear-gradient(to bottom,rgba(0,0,0,0),rgba(0,0,0,.07))"></div>
<span class="t" style="left:135.0px;top:555.0px;font-size:24.3px;color:#333;letter-spacing:0.42px;-webkit-text-stroke:0.3px #333;">Property features</span>
<span class="t" style="left:354.9px;top:557.0px;font-size:21.5px;color:#a3a3a3;letter-spacing:0.18px;">Type to search</span>
<svg style="left:0;top:0" width="700" height="1646" viewBox="0 0 700 1646" fill="none">
<rect x="45.400" y="289.0" width="3.600" height="3.200" fill="#111"/><path d="M53.500 290.6h15" stroke="#111" stroke-width="2.800"/>
<rect x="45.400" y="298.29999999999995" width="3.600" height="3.200" fill="#111"/><path d="M53.500 299.9h15" stroke="#111" stroke-width="2.800"/>
<rect x="45.400" y="307.5" width="3.600" height="3.200" fill="#111"/><path d="M53.500 309.1h15" stroke="#111" stroke-width="2.800"/>
<path d="M632.500 284.300l19.300 19.300M651.800 284.300l-19.300 19.300" stroke="#999" stroke-width="2.300"/>
<path d="M164.200 453.200l10.200 10.400l10.200-10.400" stroke="#444" stroke-width="3.200"/>
<rect x="250.600" y="448.200" width="23.200" height="20" stroke="#3f5bd9" stroke-width="2.500"/><path d="M250.600 454.900h23.200M250.600 461.600h23.200M258 448.200v20" stroke="#3f5bd9" stroke-width="2.500"/>
<path d="M473 451.700h20v12.300l-6.800 6.800h-13.200zM493 464h-6.800v6.800" stroke="#444" stroke-width="2.500" stroke-linejoin="round"/>
<circle cx="548" cy="453.500" r="3.600" stroke="#444" stroke-width="2.400"/><path d="M555.500 453.500h12.500" stroke="#444" stroke-width="2.400"/><circle cx="564.600" cy="469.400" r="3.600" stroke="#444" stroke-width="2.400"/><path d="M544.500 469.400h12.500" stroke="#444" stroke-width="2.400"/>
<circle cx="629.300" cy="452.5" r="3" fill="#111"/>
<circle cx="629.300" cy="462" r="3" fill="#111"/>
<circle cx="629.300" cy="471.5" r="3" fill="#111"/>
<path d="M75.4 572.1L70.4 574.5L68.0 579.5L62.8 577.7L57.6 579.5L55.2 574.5L50.2 572.1L52.0 566.9L50.2 561.7L55.2 559.3L57.6 554.3L62.8 556.1L68.0 554.3L70.4 559.3L75.4 561.7L73.6 566.9Z" stroke="#444" stroke-width="2.200" stroke-linejoin="round"/><circle cx="62.800" cy="566.900" r="4.300" stroke="#444" stroke-width="2.200"/>
<path d="M93.6 566.9C99.4 556.0 113.4 556.0 119.2 566.9C113.4 577.8 99.4 577.8 93.6 566.9Z" stroke="#444" stroke-width="2.2" fill="none"/><circle cx="106.4" cy="566.9" r="4.5" stroke="#444" stroke-width="2.2" fill="none"/>
<circle cx="539.900" cy="563.600" r="7.700" stroke="#555" stroke-width="2.600"/><path d="M545.500 569.500l11.500 10.500" stroke="#555" stroke-width="2.800"/>
<path d="M607.800 556.400h30M607.800 567.400h30M607.800 578.400h14M627.500 578.400h11.500M633.300 572.700v11.500" stroke="#555" stroke-width="2.300"/>
<rect x="54.2" y="801.8" width="20" height="20" stroke="#444" stroke-width="2" fill="none"/><path d="M59.4 811.8h9.600" stroke="#444" stroke-width="1.900"/>
<path d="M97.1 811.8C101.7 802.5 113.1 802.5 117.7 811.8C113.1 821.0 101.7 821.0 97.1 811.8Z" stroke="#444" stroke-width="2.1" fill="none"/><circle cx="107.4" cy="811.8" r="3.8" stroke="#444" stroke-width="2.1" fill="none"/>
<rect x="54.2" y="1042.0" width="20" height="20" stroke="#444" stroke-width="2" fill="none"/><path d="M59.4 1052.0h9.600" stroke="#444" stroke-width="1.900"/>
<path d="M97.1 1052.0C101.7 1042.8 113.1 1042.8 117.7 1052.0C113.1 1061.2 101.7 1061.2 97.1 1052.0Z" stroke="#444" stroke-width="2.1" fill="none"/><circle cx="107.4" cy="1052.0" r="3.8" stroke="#444" stroke-width="2.1" fill="none"/>
<rect x="69.0" y="633.8" width="19.6" height="19.6" stroke="#4a4a4a" stroke-width="2" fill="none"/><path d="M74.0 643.6h9.600M78.8 638.8v9.600" stroke="#4a4a4a" stroke-width="1.900"/>
<circle cx="125.600" cy="644.6" r="8.300" fill="#62b010"/>
<path d="M164.1 643.6C168.6 634.5 179.8 634.5 184.3 643.6C179.8 652.7 168.6 652.7 164.1 643.6Z" stroke="#505050" stroke-width="2.0" fill="none"/><circle cx="174.2" cy="643.6" r="3.8" stroke="#505050" stroke-width="2.0" fill="none"/>
<circle cx="582.9" cy="644.1" r="8.400" stroke="#444" stroke-width="2.600" fill="none"/><circle cx="582.9" cy="644.1" r="2.600" fill="#444"/><path d="M582.9 627.6v7M582.9 653.6v7M566.4 644.1h7M592.4 644.1h7" stroke="#444" stroke-width="2.400"/>
<circle cx="623.9" cy="636.1999999999999" r="2.400" fill="#444"/><circle cx="623.9" cy="644.4" r="2.400" fill="#444"/><circle cx="623.9" cy="652.6" r="2.400" fill="#444"/>
<rect x="69.0" y="718.0" width="19.6" height="19.6" stroke="#4a4a4a" stroke-width="2" fill="none"/><path d="M74.0 727.8h9.600M78.8 723.0v9.600" stroke="#4a4a4a" stroke-width="1.900"/>
<circle cx="125.600" cy="728.8" r="8.300" fill="#1f45c2"/>
<path d="M164.1 727.8C168.6 718.7 179.8 718.7 184.3 727.8C179.8 736.9 168.6 736.9 164.1 727.8Z" stroke="#505050" stroke-width="2.0" fill="none"/><circle cx="174.2" cy="727.8" r="3.8" stroke="#505050" stroke-width="2.0" fill="none"/>
<circle cx="582.9" cy="728.3" r="8.400" stroke="#444" stroke-width="2.600" fill="none"/><circle cx="582.9" cy="728.3" r="2.600" fill="#444"/><path d="M582.9 711.8v7M582.9 737.8v7M566.4 728.3h7M592.4 728.3h7" stroke="#444" stroke-width="2.400"/>
<circle cx="623.9" cy="720.3999999999999" r="2.400" fill="#444"/><circle cx="623.9" cy="728.5999999999999" r="2.400" fill="#444"/><circle cx="623.9" cy="736.8" r="2.400" fill="#444"/>
<rect x="69.0" y="957.8" width="19.6" height="19.6" stroke="#4a4a4a" stroke-width="2" fill="none"/><path d="M74.0 967.6h9.600M78.8 962.8v9.600" stroke="#4a4a4a" stroke-width="1.900"/>
<rect x="108.900" y="969.8" width="36" height="7" fill="#b76ee8"/>
<path d="M164.1 967.6C168.6 958.5 179.8 958.5 184.3 967.6C179.8 976.7 168.6 976.7 164.1 967.6Z" stroke="#505050" stroke-width="2.0" fill="none"/><circle cx="174.2" cy="967.6" r="3.8" stroke="#505050" stroke-width="2.0" fill="none"/>
<circle cx="582.9" cy="968.1" r="8.400" stroke="#444" stroke-width="2.600" fill="none"/><circle cx="582.9" cy="968.1" r="2.600" fill="#444"/><path d="M582.9 951.6v7M582.9 977.6v7M566.4 968.1h7M592.4 968.1h7" stroke="#444" stroke-width="2.400"/>
<circle cx="623.9" cy="960.1999999999999" r="2.400" fill="#444"/><circle cx="623.9" cy="968.4" r="2.400" fill="#444"/><circle cx="623.9" cy="976.6" r="2.400" fill="#444"/>
<rect x="69.0" y="1197.8" width="19.6" height="19.6" stroke="#4a4a4a" stroke-width="2" fill="none"/><path d="M74.0 1207.6h9.600M78.8 1202.8v9.600" stroke="#4a4a4a" stroke-width="1.900"/>
<rect x="111.200" y="1186.0" width="31.500" height="39.600" fill="#4f5397"/>
<path d="M164.1 1207.6C168.6 1198.5 179.8 1198.5 184.3 1207.6C179.8 1216.7 168.6 1216.7 164.1 1207.6Z" stroke="#505050" stroke-width="2.0" fill="none"/><circle cx="174.2" cy="1207.6" r="3.8" stroke="#505050" stroke-width="2.0" fill="none"/>
<circle cx="582.9" cy="1208.1" r="8.400" stroke="#444" stroke-width="2.600" fill="none"/><circle cx="582.9" cy="1208.1" r="2.600" fill="#444"/><path d="M582.9 1191.6v7M582.9 1217.6v7M566.4 1208.1h7M592.4 1208.1h7" stroke="#444" stroke-width="2.400"/>
<circle cx="623.9" cy="1200.1999999999998" r="2.400" fill="#444"/><circle cx="623.9" cy="1208.3999999999999" r="2.400" fill="#444"/><circle cx="623.9" cy="1216.6" r="2.400" fill="#444"/>
<rect x="69.0" y="1281.8" width="19.6" height="19.6" stroke="#4a4a4a" stroke-width="2" fill="none"/><path d="M74.0 1291.6h9.600M78.8 1286.8v9.600" stroke="#4a4a4a" stroke-width="1.900"/>
<rect x="111.200" y="1270.0" width="31.500" height="39.600" fill="#5dcb35"/>
<path d="M164.1 1291.6C168.6 1282.5 179.8 1282.5 184.3 1291.6C179.8 1300.7 168.6 1300.7 164.1 1291.6Z" stroke="#505050" stroke-width="2.0" fill="none"/><circle cx="174.2" cy="1291.6" r="3.8" stroke="#505050" stroke-width="2.0" fill="none"/>
<circle cx="582.9" cy="1292.1" r="8.400" stroke="#444" stroke-width="2.600" fill="none"/><circle cx="582.9" cy="1292.1" r="2.600" fill="#444"/><path d="M582.9 1275.6v7M582.9 1301.6v7M566.4 1292.1h7M592.4 1292.1h7" stroke="#444" stroke-width="2.400"/>
<circle cx="623.9" cy="1284.1999999999998" r="2.400" fill="#444"/><circle cx="623.9" cy="1292.3999999999999" r="2.400" fill="#444"/><circle cx="623.9" cy="1300.6" r="2.400" fill="#444"/>
<rect x="69.0" y="1365.8" width="19.6" height="19.6" stroke="#4a4a4a" stroke-width="2" fill="none"/><path d="M74.0 1375.6h9.600M78.8 1370.8v9.600" stroke="#4a4a4a" stroke-width="1.900"/>
<rect x="111.200" y="1354.0" width="31.500" height="39.600" fill="#1ad63f"/>
<path d="M164.1 1375.6C168.6 1366.5 179.8 1366.5 184.3 1375.6C179.8 1384.7 168.6 1384.7 164.1 1375.6Z" stroke="#505050" stroke-width="2.0" fill="none"/><circle cx="174.2" cy="1375.6" r="3.8" stroke="#505050" stroke-width="2.0" fill="none"/>
<circle cx="623.9" cy="1368.1999999999998" r="2.400" fill="#444"/><circle cx="623.9" cy="1376.3999999999999" r="2.400" fill="#444"/><circle cx="623.9" cy="1384.6" r="2.400" fill="#444"/>
<rect x="69.0" y="1449.8" width="19.6" height="19.6" stroke="#4a4a4a" stroke-width="2" fill="none"/><path d="M74.0 1459.6h9.600M78.8 1454.8v9.600" stroke="#4a4a4a" stroke-width="1.900"/>
<rect x="111.200" y="1438.0" width="31.500" height="39.600" fill="#1553e0"/>
<path d="M164.1 1459.6C168.6 1450.5 179.8 1450.5 184.3 1459.6C179.8 1468.7 168.6 1468.7 164.1 1459.6Z" stroke="#505050" stroke-width="2.0" fill="none"/><circle cx="174.2" cy="1459.6" r="3.8" stroke="#505050" stroke-width="2.0" fill="none"/>
<circle cx="582.9" cy="1460.1" r="8.400" stroke="#444" stroke-width="2.600" fill="none"/><circle cx="582.9" cy="1460.1" r="2.600" fill="#444"/><path d="M582.9 1443.6v7M582.9 1469.6v7M566.4 1460.1h7M592.4 1460.1h7" stroke="#444" stroke-width="2.400"/>
<circle cx="623.9" cy="1452.1999999999998" r="2.400" fill="#444"/><circle cx="623.9" cy="1460.3999999999999" r="2.400" fill="#444"/><circle cx="623.9" cy="1468.6" r="2.400" fill="#444"/>
<path d="M74.800 890.4h18M83.800 881.4v18" stroke="#3f5fe0" stroke-width="2.200"/>
<path d="M74.800 1130.7h18M83.800 1121.7v18" stroke="#3f5fe0" stroke-width="2.200"/>
<rect x="80.5" y="1532.500" width="76" height="75" rx="5" stroke="#3f5fe0" stroke-width="3"/>
<rect x="196.0" y="1532.500" width="76" height="75" rx="5" stroke="#3f5fe0" stroke-width="3"/>
<rect x="312.0" y="1532.500" width="76" height="75" rx="5" stroke="#3f5fe0" stroke-width="3"/>
<rect x="428.5" y="1532.500" width="76" height="75" rx="5" stroke="#3f5fe0" stroke-width="3"/>
<rect x="545.0" y="1532.500" width="76" height="75" rx="5" stroke="#3f5fe0" stroke-width="3"/>
<path d="M116.500 1557.500h-10v25h25v-10M121 1557.500h11v11M131.500 1558l-17 17" stroke="#3f5fe0" stroke-width="3"/>
<circle cx="242.500" cy="1560" r="4.600" stroke="#3f5fe0" stroke-width="2.800"/><circle cx="225.500" cy="1570.500" r="4.600" stroke="#3f5fe0" stroke-width="2.800"/><circle cx="242.500" cy="1580.500" r="4.600" stroke="#3f5fe0" stroke-width="2.800"/><path d="M229.500 1568l9-5.500M229.500 1573l9 5.200" stroke="#3f5fe0" stroke-width="2.800"/>
<rect x="346" y="1553" width="17.500" height="22.500" rx="2" stroke="#3f5fe0" stroke-width="3"/><path d="M337.500 1559v22.500a2 2 0 0 0 2 2h17" stroke="#3f5fe0" stroke-width="3"/>
<path d="M455 1562h25v9M460 1556.500l-6 5.500l6 5.500M480 1579.500h-27v-9M475 1574l6 5.500l-6 5.500" stroke="#3f5fe0" stroke-width="3"/><path d="M461 1555.500l-8 6.500l8 6.500zM474 1573l8 6.500l-8 6.500z" fill="#3f5fe0"/>
<path d="M568.500 1582v-10a14 14 0 0 1 28 0v10" stroke="#3f5fe0" stroke-width="3"/><rect x="567.500" y="1572.500" width="7.500" height="10.500" rx="1.500" stroke="#3f5fe0" stroke-width="3"/><rect x="590" y="1572.500" width="7.500" height="10.500" rx="1.500" stroke="#3f5fe0" stroke-width="3"/>
</svg>
<span class="t" style="left:140.7px;top:799.9px;font-size:24.3px;color:#1a1a1a;letter-spacing:-0.29px;-webkit-text-stroke:0.3px #1a1a1a;">Line</span>
<span class="t" style="left:605.8px;top:799.9px;font-size:24.3px;color:#1a1a1a;-webkit-text-stroke:0.3px #1a1a1a;">ft</span>
<span class="t" style="left:140.7px;top:1040.1px;font-size:24.3px;color:#1a1a1a;letter-spacing:0.03px;-webkit-text-stroke:0.3px #1a1a1a;">Polygon</span>
<span class="t" style="left:569.3px;top:1040.1px;font-size:24.3px;color:#1a1a1a;letter-spacing:0.82px;-webkit-text-stroke:0.3px #1a1a1a;">sq ft</span>
<span class="t" style="left:106.9px;top:875.9px;font-size:28.5px;color:#3f5fe0;letter-spacing:0.48px;-webkit-text-stroke:0.3px #3f5fe0;">Create a new line feature</span>
<span class="t" style="left:106.9px;top:1116.3px;font-size:28.5px;color:#3f5fe0;letter-spacing:0.65px;-webkit-text-stroke:0.3px #3f5fe0;">Create a new polygon feature</span>
<span class="t" style="left:205.5px;top:613.6px;font-size:22.6px;color:#222;letter-spacing:-0.19px;-webkit-text-stroke:0.25px #222;">EXISTING MISC. SITE</span>
<span class="t" style="left:205.5px;top:651.6px;font-size:22.6px;color:#222;letter-spacing:-0.13px;-webkit-text-stroke:0.25px #222;">EQUIPMENT TO BE ...</span>
<span class="t" style="left:539.1px;top:632.6px;font-size:23.2px;color:#222;-webkit-text-stroke:0.25px #222;">1</span>
<span class="t" style="left:205.5px;top:697.8px;font-size:22.6px;color:#222;letter-spacing:-0.10px;-webkit-text-stroke:0.25px #222;">EXISTING ENTIRE TENNIS</span>
<span class="t" style="left:205.5px;top:735.8px;font-size:22.6px;color:#222;letter-spacing:-0.24px;-webkit-text-stroke:0.25px #222;">LIGHTS POLE TO BE ...</span>
<span class="t" style="left:539.1px;top:716.8px;font-size:23.2px;color:#222;-webkit-text-stroke:0.25px #222;">7</span>
<span class="t" style="left:205.5px;top:937.6px;font-size:22.6px;color:#222;letter-spacing:-0.05px;-webkit-text-stroke:0.25px #222;">EXISTING STORM</span>
<span class="t" style="left:205.5px;top:975.6px;font-size:22.6px;color:#222;letter-spacing:-0.69px;-webkit-text-stroke:0.25px #222;">SEWER TO BE ...</span>
<span class="t" style="left:479.8px;top:956.6px;font-size:23.2px;color:#222;letter-spacing:-1.67px;-webkit-text-stroke:0.25px #222;">1563.91</span>
<span class="t" style="left:205.5px;top:1177.6px;font-size:22.6px;color:#222;letter-spacing:-0.12px;-webkit-text-stroke:0.25px #222;">EXISTING</span>
<span class="t" style="left:205.5px;top:1215.6px;font-size:22.6px;color:#222;letter-spacing:-0.06px;-webkit-text-stroke:0.25px #222;">PAVEMENT TO BE ...</span>
<span class="t" style="left:446.4px;top:1196.6px;font-size:23.2px;color:#222;letter-spacing:-0.45px;-webkit-text-stroke:0.25px #222;">198882.87</span>
<span class="t" style="left:205.5px;top:1261.6px;font-size:22.6px;color:#222;letter-spacing:0.37px;-webkit-text-stroke:0.25px #222;">EXISTING BUILDING</span>
<span class="t" style="left:205.5px;top:1299.6px;font-size:22.6px;color:#222;letter-spacing:-0.10px;-webkit-text-stroke:0.25px #222;">TO BE REMOVED</span>
<span class="t" style="left:453.0px;top:1280.6px;font-size:23.2px;color:#222;letter-spacing:0.28px;-webkit-text-stroke:0.25px #222;">24238.36</span>
<span class="t" style="left:205.5px;top:1345.6px;font-size:22.6px;color:#222;letter-spacing:-0.23px;-webkit-text-stroke:0.25px #222;">EXISTING ENTIRE</span>
<span class="t" style="left:205.5px;top:1383.6px;font-size:22.6px;color:#222;letter-spacing:0.08px;-webkit-text-stroke:0.25px #222;">TENNIS COURT SLA...</span>
<span class="t" style="left:459.0px;top:1364.6px;font-size:23.2px;color:#222;letter-spacing:-0.47px;-webkit-text-stroke:0.25px #222;">53850.19</span>
<span class="t" style="left:205.5px;top:1429.6px;font-size:22.6px;color:#222;letter-spacing:0.15px;-webkit-text-stroke:0.25px #222;">EXISTING POND TO BE</span>
<span class="t" style="left:205.5px;top:1467.6px;font-size:22.6px;color:#222;letter-spacing:-0.37px;-webkit-text-stroke:0.25px #222;">FILLED</span>
<span class="t" style="left:475.4px;top:1448.6px;font-size:23.2px;color:#222;letter-spacing:-1.04px;-webkit-text-stroke:0.25px #222;">42467.1</span>
<div style="position:absolute;left:552px;top:1356px;width:70px;height:70px;border-radius:50%;background:#eef0fd;border:1.500px solid #8d9cf0;box-sizing:border-box"></div>
<svg style="left:552px;top:1356px" width="70" height="70" fill="none"><path d="M35 48v-24M24.500 34.500l10.500-10.500l10.500 10.500" stroke="#3f5fe0" stroke-width="3"/></svg>
<!-- part_header -->
<div style="position:absolute;left:0;top:0;width:3024px;height:120px;background:#1c2b40;box-shadow:0 3px 14px rgba(0,0,0,.16)"></div>
<div style="position:absolute;left:250px;top:0;width:261px;height:120px;background:#4060ec"></div>
<span class="t" style="left:169.7px;top:27.5px;font-size:61px;color:#fff;font-weight:700;">M</span>
<span class="t" style="left:290.0px;top:42.5px;font-size:32.4px;color:#fff;letter-spacing:0.99px;-webkit-text-stroke:0.7px #fff;">Takeoffs</span>
<svg style="position:absolute;left:444.5px;top:52.5px" width="22" height="14"><path d="M0.5 0.5H21.5L11 13.5Z" fill="#fff"/></svg>
<span class="t" style="left:551.0px;top:42.5px;font-size:32.4px;color:#fff;letter-spacing:0.68px;-webkit-text-stroke:0.7px #fff;">Settings</span>
<svg style="position:absolute;left:698.5px;top:52.5px" width="22" height="14"><path d="M0.5 0.5H21.5L11 13.5Z" fill="#fff"/></svg>
<span class="t" style="left:807.0px;top:42.5px;font-size:32.4px;color:#fff;letter-spacing:0.42px;-webkit-text-stroke:0.7px #fff;">Pricing</span>
<span class="t" style="left:990.0px;top:42.5px;font-size:32.4px;color:#fff;letter-spacing:0.44px;-webkit-text-stroke:0.7px #fff;">Refer a friend</span>
<svg style="position:absolute;left:2560px;top:37px" width="44" height="44" viewBox="0 0 44 44" fill="none" stroke="#8b98a9" stroke-width="2.6" stroke-linecap="round"><circle cx="22" cy="21.7" r="18.6"/><path d="M16.5 17.5c0-3.4 2.5-5.6 5.7-5.6 3.1 0 5.4 2.1 5.4 4.9 0 4-5.4 4.3-5.4 8.6" /><circle cx="22.2" cy="31" r="1.3" fill="#8b98a9" stroke="none"/></svg>
<span class="t" style="left:2621.0px;top:45.3px;font-size:27.5px;color:#d8dee8;letter-spacing:0.99px;-webkit-text-stroke:0.5px #d8dee8;">Help</span>
<svg style="position:absolute;left:2739px;top:38px" width="42" height="42" viewBox="0 0 42 42" fill="none" stroke="#a9b2bf" stroke-width="2.6" stroke-linejoin="round" stroke-linecap="round"><path d="M4 31.5h34c-3.6-2.4-4.4-5-4.4-9.6v-5.4c0-6.2-3.6-10.3-9.4-11.6 0-1.7-1.3-2.9-3.2-2.9s-3.2 1.2-3.2 2.9C12 6.2 8.400 10.300 8.400 16.500v5.400c0 4.600-0.800 7.200-4.400 9.600z"/><path d="M15.5 32.5c0 3.200 2.400 6 5.500 6s5.500-2.800 5.500-6"/></svg>
<div style="position:absolute;left:2840px;top:23.5px;width:70px;height:70px;border-radius:50%;background:#ff7f50"></div>
<span class="t" style="left:2856.0px;top:46.7px;font-size:24.5px;color:#fff;font-weight:700;letter-spacing:0.98px;-webkit-text-stroke:0.6px #fff;">AS</span>
<svg style="position:absolute;left:2937px;top:53.5px" width="26" height="14"><path d="M0.5 0.5H25.5L13 12.500Z" fill="#b9c1cd"/></svg>
<div style="position:absolute;left:0;top:28px;width:198px;height:68.500px;border-radius:0 7px 7px 0;background:#212121"></div>
<div style="position:absolute;left:0;top:28px;width:108px;height:68px;background:#212121"></div>
<svg style="position:absolute;left:7px;top:18px" width="22" height="11"><path d="M0 11L10 0.5L20 11Z" fill="#212121"/></svg>
<span class="t" style="left:116.8px;top:38.6px;font-size:18.5px;color:#fff;letter-spacing:-0.39px;-webkit-text-stroke:0.35px #fff;">gular Fill</span>
<span class="t" style="left:112.0px;top:66.1px;font-size:18.5px;color:#fff;letter-spacing:-1.08px;-webkit-text-stroke:0.35px #fff;clip-path:inset(0 0 0 5px);">+ F</span>
<div style="position:absolute;left:0;top:30px;width:108px;height:64px;background:#212121"></div>
<span class="t" style="left:12.6px;top:38.6px;font-size:18.5px;color:#fff;letter-spacing:0.28px;-webkit-text-stroke:0.35px #fff;">Delete ring</span>
<span class="t" style="left:19.8px;top:66.1px;font-size:18.5px;color:#fff;letter-spacing:-1.06px;-webkit-text-stroke:0.35px #fff;">SHIFT + D</span>
</body></html>
